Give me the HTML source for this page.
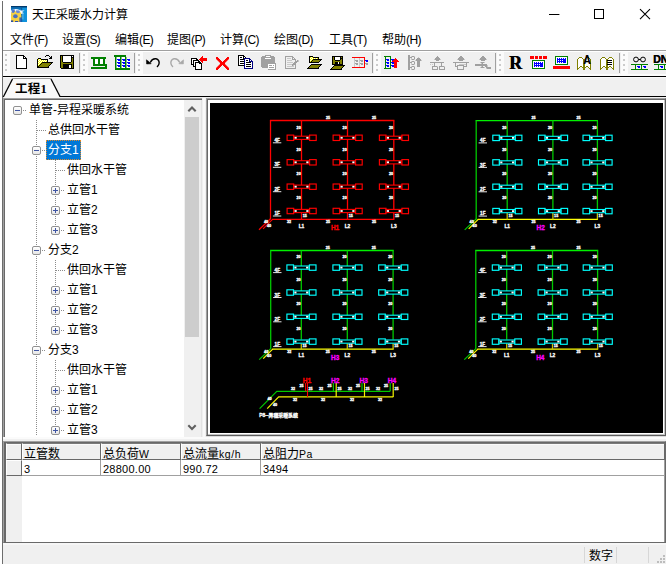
<!DOCTYPE html>
<html lang="zh-CN">
<head>
<meta charset="utf-8">
<title>天正采暖水力计算</title>
<style>
*{box-sizing:border-box;margin:0;padding:0}
html,body{width:668px;height:564px;overflow:hidden;background:#fff}
body{position:relative;font-family:"Liberation Sans","Noto Sans CJK SC",sans-serif;font-size:12px;color:#000}
.a{position:absolute}
svg{position:absolute;left:0;top:0;overflow:visible}
#win{left:3px;top:50px;width:663px;height:514px;background:#f0f0f0}
#lb{left:2px;top:1px;width:1px;height:563px;background:#6d6d6d}
#title{left:32px;top:4px;height:22px;line-height:22px;font-size:12px;white-space:nowrap}
#menu span{position:absolute;top:30px;height:20px;line-height:20px;font-size:12px;white-space:nowrap}
#menu i{font-style:normal;letter-spacing:-.6px}
.hl{background:#a0a0a0;height:1px}
.tb-sep{width:1px;top:53px;height:20px;background:#a0a0a0}
.grip{top:52px;width:7px;height:22px;background:#fbfbfb}
.grip b{position:absolute;left:2px;width:2px;height:2px;background:#cbcbcb}
#tabtxt{left:15px;top:81px;height:17px;line-height:17px;font-family:"Liberation Serif","Noto Sans CJK SC",serif;font-weight:bold;font-size:12.5px;letter-spacing:.2px;white-space:nowrap}
#tree{left:5px;top:100px;width:196px;height:337px;background:#fff;overflow:hidden}
.ti{position:absolute;height:20px;line-height:20px;white-space:nowrap;font-size:12px}
.sel{background:#0078d7;color:#fff;outline:1px dotted #e08a2a;outline-offset:-1px}
.bx{position:absolute;width:9px;height:9px;border:1px solid #919191;border-radius:2px;background:linear-gradient(#fff,#e6e6e6)}
.bx:before{content:"";position:absolute;left:1px;top:3px;width:5px;height:1px;background:#3f55a3}
.bx.p:after{content:"";position:absolute;left:3px;top:1px;width:1px;height:5px;background:#3f55a3}
.vd{position:absolute;width:1px;background:repeating-linear-gradient(to bottom,#8c8c8c 0 1px,transparent 1px 2px)}
.hd{position:absolute;height:1px;background:repeating-linear-gradient(to right,#8c8c8c 0 1px,transparent 1px 2px)}
#sb{left:184px;top:100px;width:17px;height:337px;background:#f0f0f0}
#thumb{left:185px;top:117px;width:14px;height:220px;background:#cdcdcd}
#cv{left:206px;top:98px;width:460px;height:338px;background:#fff;border:1px solid #5c5c5c;border-top-color:#a0a0a0;border-left-color:#a0a0a0;box-shadow:inset 1px 1px 0 0 #696969,inset -1px -1px 0 0 #c4c4c4,0 1px 0 0 #dcdcdc}
#cvb{left:210px;top:103px;width:453px;height:330px;background:#000}
#grid{left:3px;top:441px;width:663px;height:102px;background:#fff;border:1px solid #696969;border-top-color:#a0a0a0;border-left-color:#a0a0a0;box-shadow:inset 2px 1px 0 0 #696969,inset -1px 0 0 0 #9a9a9a}
.gt{font-family:"Liberation Sans","Noto Sans CJK SC",sans-serif;font-size:12px;white-space:nowrap;position:absolute}
.gh{position:absolute;background:#f0f0f0;border-right:1px solid #696969;border-bottom:1px solid #696969;border-top:1px solid #fff;border-left:1px solid #fff}
.gh.t{border-top-color:#7a7a7a;box-shadow:inset 0 1px 0 #fafafa}
.gc{position:absolute;background:#fff;border-right:1px solid #a0a0a0;border-bottom:1px solid #a0a0a0}
.num{font-family:"Liberation Sans",sans-serif;font-size:11px;letter-spacing:.25px}
.lat{font-family:"Liberation Sans",sans-serif;font-size:10.5px;letter-spacing:.6px}
#status span{position:absolute}
</style>
</head>
<body>
<div id="win" class="a"></div>
<div id="lb" class="a"></div>
<svg width="668" height="30" viewBox="0 0 668 30">
<clipPath id="ic"><rect x="11" y="6" width="16" height="16"/></clipPath>
<g clip-path="url(#ic)">
<rect x="11" y="6" width="16" height="16" fill="#1587d3"/>
<rect x="22" y="6" width="5" height="16" fill="#0f92dc"/>
<rect x="11" y="6" width="16" height="1.5" fill="#02396c"/>
<rect x="11" y="7.5" width="10.6" height="1.6" fill="#0d6fb4"/>
<rect x="21.2" y="7.4" width="1" height="14.6" fill="#0a5a98"/>
<path d="M10.5 11.2 Q13.5 8.2 17.5 9.2 L21 10.6 L24.6 10.4 L22 12 L24 13.2 L21 14 L11 13.5z" fill="#f2f6fc"/>
<path d="M11.2 12.2 L13.6 10.6 L16.2 11.6 L19 10.8 L21 13 L21.4 16.5 L20.6 22 L11 22 L11 16.5z" fill="#f7d043"/>
<path d="M12 9.8l2.4-.6 .6 2.2-1.4 1.6-2-.6z" fill="#5478cc"/>
<path d="M16.2 10.2l3.2 .4 .6 1.8-2.2 .8-1.8-1z" fill="#6b8ad6"/>
<ellipse cx="15.4" cy="16.3" rx="2.3" ry="2" fill="#4a70c4"/>
<rect x="11" y="20.4" width="2.2" height="1.6" fill="#2b4fa6"/><rect x="15" y="21" width="3.2" height="1" fill="#2b4fa6"/><rect x="19.4" y="17.4" width="1.8" height="4.6" fill="#3b62b6"/>
<rect x="22.4" y="13.4" width="1" height="6" fill="#8fd0f4" opacity=".7"/>
</g>
<path d="M549 14.5h10.4" stroke="#000" stroke-width="1"/>
<rect x="594.5" y="9.5" width="9" height="9" fill="none" stroke="#000" stroke-width="1"/>
<path d="M640 9.2l10 10M650 9.2l-10 10" stroke="#000" stroke-width="1.1"/>
</svg>
<div id="title" class="a">天正采暖水力计算</div>
<div id="menu"><span style="left:10px">文件<i>(F)</i></span><span style="left:62px">设置<i>(S)</i></span><span style="left:115px">编辑<i>(E)</i></span><span style="left:167px">提图<i>(P)</i></span><span style="left:220px">计算<i>(C)</i></span><span style="left:274px">绘图<i>(D)</i></span><span style="left:329px">工具<i>(T)</i></span><span style="left:382px">帮助<i>(H)</i></span></div>
<div class="a hl" style="left:3px;top:50px;width:663px"></div>
<div class="a" style="left:3px;top:51px;width:663px;height:1px;background:#fff"></div>
<div class="a" style="left:3px;top:74px;width:663px;height:2px;background:#fbfbfb"></div>
<div class="a" style="left:3px;top:76px;width:663px;height:1px;background:#000"></div>
<div class="a" style="left:3px;top:77px;width:663px;height:1px;background:#fafafa"></div>
<div class="a grip" style="left:3px"><b style="top:2px"></b><b style="top:7px"></b><b style="top:12px"></b><b style="top:17px"></b></div>
<div class="a grip" style="left:81px"><b style="top:2px"></b><b style="top:7px"></b><b style="top:12px"></b><b style="top:17px"></b></div>
<div class="a grip" style="left:136px"><b style="top:2px"></b><b style="top:7px"></b><b style="top:12px"></b><b style="top:17px"></b></div>
<div class="a grip" style="left:374px"><b style="top:2px"></b><b style="top:7px"></b><b style="top:12px"></b><b style="top:17px"></b></div>
<div class="a grip" style="left:497px"><b style="top:2px"></b><b style="top:7px"></b><b style="top:12px"></b><b style="top:17px"></b></div>
<div class="a grip" style="left:621px"><b style="top:2px"></b><b style="top:7px"></b><b style="top:12px"></b><b style="top:17px"></b></div>
<div class="a tb-sep" style="left:79px"></div>
<div class="a tb-sep" style="left:134px"></div>
<div class="a tb-sep" style="left:372px"></div>
<div class="a tb-sep" style="left:495px"></div>
<div class="a tb-sep" style="left:619px"></div>
<svg width="668" height="564" viewBox="0 0 668 564">
<path d="M3.5 96.5 L12.5 79 H51 L60 96.5 V98 H3.5z" fill="#f9f9f9"/>
<path d="M3.3 97 L12.5 79" stroke="#000" stroke-width="1.3" fill="none"/>
<path d="M12 78.5 H51.5" stroke="#a0a0a0" stroke-width="1" fill="none"/>
<path d="M51 79 L60 96.5" stroke="#000" stroke-width="1.3" fill="none"/><path d="M59.5 96.5 H666" stroke="#000" stroke-width="1" fill="none"/>
</svg>
<div id="tabtxt" class="a">工程1</div>
<div id="tree" class="a">
<div class="vd" style="left:31px;top:20px;height:315px"></div>
<div class="vd" style="left:50px;top:60px;height:71px"></div>
<div class="vd" style="left:50px;top:160px;height:71px"></div>
<div class="vd" style="left:50px;top:260px;height:71px"></div>
<div class="hd" style="left:18px;top:10px;width:4px"></div>
<div class="bx" style="left:8px;top:6px"></div>
<div class="ti" style="left:24px;top:0px">单管-异程采暖系统</div>
<div class="hd" style="left:32px;top:30px;width:9px"></div>
<div class="ti" style="left:43px;top:20px">总供回水干管</div>
<div class="hd" style="left:37px;top:50px;width:4px"></div>
<div class="bx" style="left:27px;top:46px"></div>
<div class="ti sel" style="left:41px;top:40px;height:19.5px;line-height:20px;padding:0 2px 0 2px">分支1</div>
<div class="hd" style="left:51px;top:70px;width:9px"></div>
<div class="ti" style="left:62px;top:60px">供回水干管</div>
<div class="hd" style="left:56px;top:90px;width:4px"></div>
<div class="bx p" style="left:46px;top:86px"></div>
<div class="ti" style="left:62px;top:80px">立管1</div>
<div class="hd" style="left:56px;top:110px;width:4px"></div>
<div class="bx p" style="left:46px;top:106px"></div>
<div class="ti" style="left:62px;top:100px">立管2</div>
<div class="hd" style="left:56px;top:130px;width:4px"></div>
<div class="bx p" style="left:46px;top:126px"></div>
<div class="ti" style="left:62px;top:120px">立管3</div>
<div class="hd" style="left:37px;top:150px;width:4px"></div>
<div class="bx" style="left:27px;top:146px"></div>
<div class="ti" style="left:43px;top:140px">分支2</div>
<div class="hd" style="left:51px;top:170px;width:9px"></div>
<div class="ti" style="left:62px;top:160px">供回水干管</div>
<div class="hd" style="left:56px;top:190px;width:4px"></div>
<div class="bx p" style="left:46px;top:186px"></div>
<div class="ti" style="left:62px;top:180px">立管1</div>
<div class="hd" style="left:56px;top:210px;width:4px"></div>
<div class="bx p" style="left:46px;top:206px"></div>
<div class="ti" style="left:62px;top:200px">立管2</div>
<div class="hd" style="left:56px;top:230px;width:4px"></div>
<div class="bx p" style="left:46px;top:226px"></div>
<div class="ti" style="left:62px;top:220px">立管3</div>
<div class="hd" style="left:37px;top:250px;width:4px"></div>
<div class="bx" style="left:27px;top:246px"></div>
<div class="ti" style="left:43px;top:240px">分支3</div>
<div class="hd" style="left:51px;top:270px;width:9px"></div>
<div class="ti" style="left:62px;top:260px">供回水干管</div>
<div class="hd" style="left:56px;top:290px;width:4px"></div>
<div class="bx p" style="left:46px;top:286px"></div>
<div class="ti" style="left:62px;top:280px">立管1</div>
<div class="hd" style="left:56px;top:310px;width:4px"></div>
<div class="bx p" style="left:46px;top:306px"></div>
<div class="ti" style="left:62px;top:300px">立管2</div>
<div class="hd" style="left:56px;top:330px;width:4px"></div>
<div class="bx p" style="left:46px;top:326px"></div>
<div class="ti" style="left:62px;top:320px">立管3</div>
</div>
<div id="sb" class="a"></div><div id="thumb" class="a"></div>
<svg width="668" height="564" viewBox="0 0 668 564">
<path d="M188.3 111.2l3.7-3.7 3.7 3.7" stroke="#606060" stroke-width="2.1" fill="none"/>
<path d="M188.3 425.3l3.7 3.7 3.7-3.7" stroke="#606060" stroke-width="2.1" fill="none"/>
</svg>
<div class="a" style="left:3px;top:98px;width:199px;height:1px;background:#a0a0a0"></div>
<div class="a" style="left:3px;top:99px;width:199px;height:1px;background:#696969"></div>
<div class="a" style="left:3px;top:98px;width:1px;height:340px;background:#a0a0a0"></div>
<div class="a" style="left:4px;top:99px;width:1px;height:339px;background:#696969"></div>
<div class="a" style="left:201px;top:100px;width:1px;height:337px;background:#e3e3e3"></div>
<div class="a" style="left:3px;top:437px;width:663px;height:2px;background:#fbfbfb"></div>
<div class="a" style="left:203px;top:98px;width:2px;height:340px;background:#fafafa"></div>
<svg width="666" height="80" viewBox="0 0 666 80" shape-rendering="crispEdges" style="overflow:hidden"><rect x="16" y="55" width="8" height="1" fill="#000"/><rect x="16" y="56" width="1" height="1" fill="#000"/><rect x="17" y="56" width="6" height="1" fill="#fff"/><rect x="23" y="56" width="2" height="1" fill="#000"/><rect x="16" y="57" width="1" height="1" fill="#000"/><rect x="17" y="57" width="6" height="1" fill="#fff"/><rect x="23" y="57" width="1" height="1" fill="#000"/><rect x="24" y="57" width="1" height="1" fill="#fff"/><rect x="25" y="57" width="1" height="1" fill="#000"/><rect x="16" y="58" width="1" height="1" fill="#000"/><rect x="17" y="58" width="6" height="1" fill="#fff"/><rect x="23" y="58" width="4" height="1" fill="#000"/><rect x="16" y="59" width="1" height="1" fill="#000"/><rect x="17" y="59" width="9" height="1" fill="#fff"/><rect x="26" y="59" width="1" height="1" fill="#000"/><rect x="16" y="60" width="1" height="1" fill="#000"/><rect x="17" y="60" width="9" height="1" fill="#fff"/><rect x="26" y="60" width="1" height="1" fill="#000"/><rect x="16" y="61" width="1" height="1" fill="#000"/><rect x="17" y="61" width="9" height="1" fill="#fff"/><rect x="26" y="61" width="1" height="1" fill="#000"/><rect x="16" y="62" width="1" height="1" fill="#000"/><rect x="17" y="62" width="9" height="1" fill="#fff"/><rect x="26" y="62" width="1" height="1" fill="#000"/><rect x="16" y="63" width="1" height="1" fill="#000"/><rect x="17" y="63" width="9" height="1" fill="#fff"/><rect x="26" y="63" width="1" height="1" fill="#000"/><rect x="16" y="64" width="1" height="1" fill="#000"/><rect x="17" y="64" width="9" height="1" fill="#fff"/><rect x="26" y="64" width="1" height="1" fill="#000"/><rect x="16" y="65" width="1" height="1" fill="#000"/><rect x="17" y="65" width="9" height="1" fill="#fff"/><rect x="26" y="65" width="1" height="1" fill="#000"/><rect x="16" y="66" width="1" height="1" fill="#000"/><rect x="17" y="66" width="9" height="1" fill="#fff"/><rect x="26" y="66" width="1" height="1" fill="#000"/><rect x="16" y="67" width="1" height="1" fill="#000"/><rect x="17" y="67" width="9" height="1" fill="#fff"/><rect x="26" y="67" width="1" height="1" fill="#000"/><rect x="16" y="68" width="11" height="1" fill="#000"/><rect x="46" y="55" width="3" height="1" fill="#000"/><rect x="45" y="56" width="1" height="1" fill="#000"/><rect x="49" y="56" width="1" height="1" fill="#000"/><rect x="51" y="56" width="1" height="1" fill="#000"/><rect x="50" y="57" width="2" height="1" fill="#000"/><rect x="38" y="58" width="3" height="1" fill="#000"/><rect x="49" y="58" width="3" height="1" fill="#000"/><rect x="37" y="59" width="1" height="1" fill="#000"/><rect x="38" y="59" width="1" height="1" fill="#ffff00"/><rect x="39" y="59" width="1" height="1" fill="#fff"/><rect x="40" y="59" width="1" height="1" fill="#ffff00"/><rect x="41" y="59" width="7" height="1" fill="#000"/><rect x="37" y="60" width="1" height="1" fill="#000"/><rect x="38" y="60" width="1" height="1" fill="#fff"/><rect x="39" y="60" width="1" height="1" fill="#ffff00"/><rect x="40" y="60" width="1" height="1" fill="#fff"/><rect x="41" y="60" width="1" height="1" fill="#ffff00"/><rect x="42" y="60" width="1" height="1" fill="#fff"/><rect x="43" y="60" width="1" height="1" fill="#ffff00"/><rect x="44" y="60" width="1" height="1" fill="#fff"/><rect x="45" y="60" width="1" height="1" fill="#ffff00"/><rect x="46" y="60" width="1" height="1" fill="#fff"/><rect x="47" y="60" width="1" height="1" fill="#000"/><rect x="37" y="61" width="1" height="1" fill="#000"/><rect x="38" y="61" width="1" height="1" fill="#ffff00"/><rect x="39" y="61" width="1" height="1" fill="#fff"/><rect x="40" y="61" width="1" height="1" fill="#ffff00"/><rect x="41" y="61" width="1" height="1" fill="#fff"/><rect x="42" y="61" width="1" height="1" fill="#ffff00"/><rect x="43" y="61" width="1" height="1" fill="#fff"/><rect x="44" y="61" width="1" height="1" fill="#ffff00"/><rect x="45" y="61" width="1" height="1" fill="#fff"/><rect x="46" y="61" width="1" height="1" fill="#ffff00"/><rect x="47" y="61" width="1" height="1" fill="#000"/><rect x="37" y="62" width="1" height="1" fill="#000"/><rect x="38" y="62" width="1" height="1" fill="#fff"/><rect x="39" y="62" width="1" height="1" fill="#ffff00"/><rect x="40" y="62" width="1" height="1" fill="#fff"/><rect x="41" y="62" width="1" height="1" fill="#ffff00"/><rect x="42" y="62" width="11" height="1" fill="#000"/><rect x="37" y="63" width="1" height="1" fill="#000"/><rect x="38" y="63" width="1" height="1" fill="#ffff00"/><rect x="39" y="63" width="1" height="1" fill="#fff"/><rect x="40" y="63" width="1" height="1" fill="#ffff00"/><rect x="41" y="63" width="1" height="1" fill="#000"/><rect x="42" y="63" width="9" height="1" fill="#808000"/><rect x="51" y="63" width="1" height="1" fill="#000"/><rect x="37" y="64" width="1" height="1" fill="#000"/><rect x="38" y="64" width="1" height="1" fill="#fff"/><rect x="39" y="64" width="1" height="1" fill="#ffff00"/><rect x="40" y="64" width="1" height="1" fill="#000"/><rect x="41" y="64" width="9" height="1" fill="#808000"/><rect x="50" y="64" width="1" height="1" fill="#000"/><rect x="37" y="65" width="1" height="1" fill="#000"/><rect x="38" y="65" width="1" height="1" fill="#ffff00"/><rect x="39" y="65" width="1" height="1" fill="#000"/><rect x="40" y="65" width="9" height="1" fill="#808000"/><rect x="49" y="65" width="1" height="1" fill="#000"/><rect x="37" y="66" width="2" height="1" fill="#000"/><rect x="39" y="66" width="9" height="1" fill="#808000"/><rect x="48" y="66" width="1" height="1" fill="#000"/><rect x="37" y="67" width="12" height="1" fill="#000"/><rect x="60" y="55" width="14" height="1" fill="#000"/><rect x="60" y="56" width="1" height="1" fill="#000"/><rect x="61" y="56" width="1" height="1" fill="#808000"/><rect x="62" y="56" width="1" height="1" fill="#000"/><rect x="63" y="56" width="8" height="1" fill="#fff"/><rect x="71" y="56" width="1" height="1" fill="#000"/><rect x="72" y="56" width="1" height="1" fill="#fff"/><rect x="73" y="56" width="1" height="1" fill="#000"/><rect x="60" y="57" width="1" height="1" fill="#000"/><rect x="61" y="57" width="1" height="1" fill="#808000"/><rect x="62" y="57" width="1" height="1" fill="#000"/><rect x="63" y="57" width="8" height="1" fill="#fff"/><rect x="71" y="57" width="3" height="1" fill="#000"/><rect x="60" y="58" width="1" height="1" fill="#000"/><rect x="61" y="58" width="1" height="1" fill="#808000"/><rect x="62" y="58" width="1" height="1" fill="#000"/><rect x="63" y="58" width="8" height="1" fill="#fff"/><rect x="71" y="58" width="1" height="1" fill="#000"/><rect x="72" y="58" width="1" height="1" fill="#808000"/><rect x="73" y="58" width="1" height="1" fill="#000"/><rect x="60" y="59" width="1" height="1" fill="#000"/><rect x="61" y="59" width="1" height="1" fill="#808000"/><rect x="62" y="59" width="1" height="1" fill="#000"/><rect x="63" y="59" width="8" height="1" fill="#fff"/><rect x="71" y="59" width="1" height="1" fill="#000"/><rect x="72" y="59" width="1" height="1" fill="#808000"/><rect x="73" y="59" width="1" height="1" fill="#000"/><rect x="60" y="60" width="1" height="1" fill="#000"/><rect x="61" y="60" width="1" height="1" fill="#808000"/><rect x="62" y="60" width="1" height="1" fill="#000"/><rect x="63" y="60" width="8" height="1" fill="#fff"/><rect x="71" y="60" width="1" height="1" fill="#000"/><rect x="72" y="60" width="1" height="1" fill="#808000"/><rect x="73" y="60" width="1" height="1" fill="#000"/><rect x="60" y="61" width="1" height="1" fill="#000"/><rect x="61" y="61" width="1" height="1" fill="#808000"/><rect x="62" y="61" width="1" height="1" fill="#000"/><rect x="63" y="61" width="8" height="1" fill="#fff"/><rect x="71" y="61" width="1" height="1" fill="#000"/><rect x="72" y="61" width="1" height="1" fill="#808000"/><rect x="73" y="61" width="1" height="1" fill="#000"/><rect x="60" y="62" width="1" height="1" fill="#000"/><rect x="61" y="62" width="2" height="1" fill="#808000"/><rect x="63" y="62" width="8" height="1" fill="#000"/><rect x="71" y="62" width="2" height="1" fill="#808000"/><rect x="73" y="62" width="1" height="1" fill="#000"/><rect x="60" y="63" width="1" height="1" fill="#000"/><rect x="61" y="63" width="12" height="1" fill="#808000"/><rect x="73" y="63" width="1" height="1" fill="#000"/><rect x="60" y="64" width="1" height="1" fill="#000"/><rect x="61" y="64" width="2" height="1" fill="#808000"/><rect x="63" y="64" width="9" height="1" fill="#000"/><rect x="72" y="64" width="1" height="1" fill="#808000"/><rect x="73" y="64" width="1" height="1" fill="#000"/><rect x="60" y="65" width="1" height="1" fill="#000"/><rect x="61" y="65" width="2" height="1" fill="#808000"/><rect x="63" y="65" width="6" height="1" fill="#000"/><rect x="69" y="65" width="2" height="1" fill="#fff"/><rect x="71" y="65" width="1" height="1" fill="#000"/><rect x="72" y="65" width="1" height="1" fill="#808000"/><rect x="73" y="65" width="1" height="1" fill="#000"/><rect x="60" y="66" width="1" height="1" fill="#000"/><rect x="61" y="66" width="2" height="1" fill="#808000"/><rect x="63" y="66" width="6" height="1" fill="#000"/><rect x="69" y="66" width="2" height="1" fill="#fff"/><rect x="71" y="66" width="1" height="1" fill="#000"/><rect x="72" y="66" width="1" height="1" fill="#808000"/><rect x="73" y="66" width="1" height="1" fill="#000"/><rect x="60" y="67" width="1" height="1" fill="#000"/><rect x="61" y="67" width="2" height="1" fill="#808000"/><rect x="63" y="67" width="6" height="1" fill="#000"/><rect x="69" y="67" width="2" height="1" fill="#fff"/><rect x="71" y="67" width="1" height="1" fill="#000"/><rect x="72" y="67" width="1" height="1" fill="#808000"/><rect x="73" y="67" width="1" height="1" fill="#000"/><rect x="61" y="68" width="13" height="1" fill="#000"/><rect x="91" y="57" width="15" height="1" fill="#008000"/><rect x="91" y="58" width="15" height="1" fill="#008000"/><rect x="93" y="59" width="2" height="1" fill="#008000"/><rect x="95" y="59" width="3" height="1" fill="#fff"/><rect x="98" y="59" width="2" height="1" fill="#008000"/><rect x="100" y="59" width="3" height="1" fill="#fff"/><rect x="103" y="59" width="2" height="1" fill="#008000"/><rect x="93" y="60" width="2" height="1" fill="#008000"/><rect x="95" y="60" width="3" height="1" fill="#fff"/><rect x="98" y="60" width="2" height="1" fill="#008000"/><rect x="100" y="60" width="3" height="1" fill="#fff"/><rect x="103" y="60" width="2" height="1" fill="#008000"/><rect x="93" y="61" width="2" height="1" fill="#008000"/><rect x="95" y="61" width="3" height="1" fill="#fff"/><rect x="98" y="61" width="2" height="1" fill="#008000"/><rect x="100" y="61" width="3" height="1" fill="#fff"/><rect x="103" y="61" width="2" height="1" fill="#008000"/><rect x="93" y="62" width="2" height="1" fill="#008000"/><rect x="95" y="62" width="3" height="1" fill="#fff"/><rect x="98" y="62" width="2" height="1" fill="#008000"/><rect x="100" y="62" width="3" height="1" fill="#fff"/><rect x="103" y="62" width="2" height="1" fill="#008000"/><rect x="93" y="63" width="2" height="1" fill="#008000"/><rect x="95" y="63" width="3" height="1" fill="#fff"/><rect x="98" y="63" width="2" height="1" fill="#008000"/><rect x="100" y="63" width="3" height="1" fill="#fff"/><rect x="103" y="63" width="2" height="1" fill="#008000"/><rect x="93" y="64" width="14" height="1" fill="#008000"/><rect x="93" y="65" width="14" height="1" fill="#008000"/><rect x="105" y="66" width="2" height="1" fill="#008000"/><rect x="91" y="67" width="16" height="1" fill="#008000"/><rect x="91" y="68" width="16" height="1" fill="#008000"/><rect x="114" y="55" width="12" height="1" fill="#008000"/><rect x="114" y="56" width="12" height="1" fill="#008000"/><rect x="115" y="57" width="1" height="1" fill="#008000"/><rect x="116" y="57" width="1" height="1" fill="#7fbf7f"/><rect x="117" y="57" width="3" height="1" fill="#fff"/><rect x="120" y="57" width="1" height="1" fill="#008000"/><rect x="121" y="57" width="1" height="1" fill="#7fbf7f"/><rect x="122" y="57" width="3" height="1" fill="#fff"/><rect x="125" y="57" width="1" height="1" fill="#008000"/><rect x="126" y="57" width="1" height="1" fill="#7fbf7f"/><rect x="115" y="58" width="1" height="1" fill="#008000"/><rect x="116" y="58" width="1" height="1" fill="#7fbf7f"/><rect x="117" y="58" width="3" height="1" fill="#fff"/><rect x="120" y="58" width="1" height="1" fill="#008000"/><rect x="121" y="58" width="1" height="1" fill="#7fbf7f"/><rect x="122" y="58" width="3" height="1" fill="#fff"/><rect x="125" y="58" width="1" height="1" fill="#008000"/><rect x="126" y="58" width="1" height="1" fill="#7fbf7f"/><rect x="127" y="58" width="2" height="1" fill="#fff"/><rect x="115" y="59" width="1" height="1" fill="#008000"/><rect x="116" y="59" width="1" height="1" fill="#7fbf7f"/><rect x="117" y="59" width="3" height="1" fill="#0000ff"/><rect x="120" y="59" width="1" height="1" fill="#008000"/><rect x="121" y="59" width="1" height="1" fill="#7fbf7f"/><rect x="122" y="59" width="3" height="1" fill="#0000ff"/><rect x="125" y="59" width="1" height="1" fill="#008000"/><rect x="126" y="59" width="1" height="1" fill="#7fbf7f"/><rect x="127" y="59" width="3" height="1" fill="#0000ff"/><rect x="115" y="60" width="1" height="1" fill="#008000"/><rect x="116" y="60" width="1" height="1" fill="#7fbf7f"/><rect x="117" y="60" width="1" height="1" fill="#fff"/><rect x="118" y="60" width="2" height="1" fill="#0000ff"/><rect x="120" y="60" width="1" height="1" fill="#008000"/><rect x="121" y="60" width="1" height="1" fill="#7fbf7f"/><rect x="122" y="60" width="1" height="1" fill="#fff"/><rect x="123" y="60" width="2" height="1" fill="#0000ff"/><rect x="125" y="60" width="1" height="1" fill="#008000"/><rect x="126" y="60" width="1" height="1" fill="#7fbf7f"/><rect x="127" y="60" width="1" height="1" fill="#fff"/><rect x="128" y="60" width="2" height="1" fill="#0000ff"/><rect x="115" y="61" width="1" height="1" fill="#008000"/><rect x="116" y="61" width="1" height="1" fill="#7fbf7f"/><rect x="117" y="61" width="3" height="1" fill="#fff"/><rect x="120" y="61" width="1" height="1" fill="#008000"/><rect x="121" y="61" width="1" height="1" fill="#7fbf7f"/><rect x="122" y="61" width="3" height="1" fill="#fff"/><rect x="125" y="61" width="1" height="1" fill="#008000"/><rect x="126" y="61" width="1" height="1" fill="#7fbf7f"/><rect x="127" y="61" width="3" height="1" fill="#fff"/><rect x="115" y="62" width="1" height="1" fill="#008000"/><rect x="116" y="62" width="1" height="1" fill="#7fbf7f"/><rect x="117" y="62" width="3" height="1" fill="#0000ff"/><rect x="120" y="62" width="1" height="1" fill="#008000"/><rect x="121" y="62" width="1" height="1" fill="#7fbf7f"/><rect x="122" y="62" width="3" height="1" fill="#0000ff"/><rect x="125" y="62" width="1" height="1" fill="#008000"/><rect x="126" y="62" width="1" height="1" fill="#7fbf7f"/><rect x="127" y="62" width="3" height="1" fill="#0000ff"/><rect x="115" y="63" width="1" height="1" fill="#008000"/><rect x="116" y="63" width="1" height="1" fill="#7fbf7f"/><rect x="117" y="63" width="1" height="1" fill="#fff"/><rect x="118" y="63" width="2" height="1" fill="#0000ff"/><rect x="120" y="63" width="1" height="1" fill="#008000"/><rect x="121" y="63" width="1" height="1" fill="#7fbf7f"/><rect x="122" y="63" width="1" height="1" fill="#fff"/><rect x="123" y="63" width="2" height="1" fill="#0000ff"/><rect x="125" y="63" width="1" height="1" fill="#008000"/><rect x="126" y="63" width="1" height="1" fill="#7fbf7f"/><rect x="127" y="63" width="1" height="1" fill="#fff"/><rect x="128" y="63" width="2" height="1" fill="#0000ff"/><rect x="115" y="64" width="1" height="1" fill="#008000"/><rect x="116" y="64" width="1" height="1" fill="#7fbf7f"/><rect x="117" y="64" width="3" height="1" fill="#fff"/><rect x="120" y="64" width="1" height="1" fill="#008000"/><rect x="121" y="64" width="1" height="1" fill="#7fbf7f"/><rect x="122" y="64" width="3" height="1" fill="#fff"/><rect x="125" y="64" width="1" height="1" fill="#008000"/><rect x="126" y="64" width="1" height="1" fill="#7fbf7f"/><rect x="127" y="64" width="3" height="1" fill="#fff"/><rect x="115" y="65" width="1" height="1" fill="#008000"/><rect x="116" y="65" width="1" height="1" fill="#7fbf7f"/><rect x="117" y="65" width="3" height="1" fill="#0000ff"/><rect x="120" y="65" width="1" height="1" fill="#008000"/><rect x="121" y="65" width="1" height="1" fill="#7fbf7f"/><rect x="122" y="65" width="3" height="1" fill="#0000ff"/><rect x="125" y="65" width="1" height="1" fill="#008000"/><rect x="126" y="65" width="1" height="1" fill="#7fbf7f"/><rect x="127" y="65" width="3" height="1" fill="#0000ff"/><rect x="115" y="66" width="1" height="1" fill="#008000"/><rect x="116" y="66" width="1" height="1" fill="#7fbf7f"/><rect x="117" y="66" width="1" height="1" fill="#fff"/><rect x="118" y="66" width="2" height="1" fill="#0000ff"/><rect x="120" y="66" width="1" height="1" fill="#008000"/><rect x="121" y="66" width="1" height="1" fill="#7fbf7f"/><rect x="122" y="66" width="1" height="1" fill="#fff"/><rect x="123" y="66" width="2" height="1" fill="#0000ff"/><rect x="125" y="66" width="1" height="1" fill="#008000"/><rect x="126" y="66" width="1" height="1" fill="#7fbf7f"/><rect x="127" y="66" width="1" height="1" fill="#fff"/><rect x="128" y="66" width="2" height="1" fill="#0000ff"/><rect x="115" y="67" width="1" height="1" fill="#008000"/><rect x="116" y="67" width="1" height="1" fill="#7fbf7f"/><rect x="117" y="67" width="3" height="1" fill="#fff"/><rect x="120" y="67" width="1" height="1" fill="#008000"/><rect x="121" y="67" width="1" height="1" fill="#7fbf7f"/><rect x="122" y="67" width="3" height="1" fill="#fff"/><rect x="125" y="67" width="1" height="1" fill="#008000"/><rect x="126" y="67" width="1" height="1" fill="#7fbf7f"/><rect x="127" y="67" width="2" height="1" fill="#fff"/><rect x="115" y="68" width="15" height="1" fill="#008000"/><rect x="115" y="69" width="15" height="1" fill="#008000"/><rect x="191" y="58" width="6" height="1" fill="#000"/><rect x="191" y="59" width="1" height="1" fill="#000"/><rect x="192" y="59" width="4" height="1" fill="#fff"/><rect x="196" y="59" width="2" height="1" fill="#000"/><rect x="191" y="60" width="1" height="1" fill="#000"/><rect x="192" y="60" width="1" height="1" fill="#fff"/><rect x="193" y="60" width="6" height="1" fill="#000"/><rect x="191" y="61" width="1" height="1" fill="#000"/><rect x="192" y="61" width="1" height="1" fill="#fff"/><rect x="193" y="61" width="1" height="1" fill="#000"/><rect x="194" y="61" width="4" height="1" fill="#fff"/><rect x="198" y="61" width="2" height="1" fill="#000"/><rect x="191" y="62" width="1" height="1" fill="#000"/><rect x="192" y="62" width="1" height="1" fill="#fff"/><rect x="193" y="62" width="1" height="1" fill="#000"/><rect x="194" y="62" width="1" height="1" fill="#fff"/><rect x="195" y="62" width="6" height="1" fill="#000"/><rect x="191" y="63" width="1" height="1" fill="#000"/><rect x="192" y="63" width="1" height="1" fill="#fff"/><rect x="193" y="63" width="1" height="1" fill="#000"/><rect x="194" y="63" width="1" height="1" fill="#fff"/><rect x="195" y="63" width="1" height="1" fill="#000"/><rect x="196" y="63" width="3" height="1" fill="#fff"/><rect x="199" y="63" width="3" height="1" fill="#000"/><rect x="191" y="64" width="3" height="1" fill="#000"/><rect x="194" y="64" width="1" height="1" fill="#fff"/><rect x="195" y="64" width="1" height="1" fill="#000"/><rect x="196" y="64" width="5" height="1" fill="#fff"/><rect x="201" y="64" width="1" height="1" fill="#000"/><rect x="193" y="65" width="1" height="1" fill="#000"/><rect x="194" y="65" width="1" height="1" fill="#fff"/><rect x="195" y="65" width="1" height="1" fill="#000"/><rect x="196" y="65" width="5" height="1" fill="#fff"/><rect x="201" y="65" width="1" height="1" fill="#000"/><rect x="193" y="66" width="3" height="1" fill="#000"/><rect x="196" y="66" width="5" height="1" fill="#fff"/><rect x="201" y="66" width="1" height="1" fill="#000"/><rect x="195" y="67" width="1" height="1" fill="#000"/><rect x="196" y="67" width="5" height="1" fill="#fff"/><rect x="201" y="67" width="1" height="1" fill="#000"/><rect x="195" y="68" width="1" height="1" fill="#000"/><rect x="196" y="68" width="5" height="1" fill="#fff"/><rect x="201" y="68" width="1" height="1" fill="#000"/><rect x="195" y="69" width="7" height="1" fill="#000"/><rect x="202" y="56" width="1" height="1" fill="#ff0000"/><rect x="201" y="57" width="2" height="1" fill="#ff0000"/><rect x="200" y="58" width="7" height="1" fill="#ff0000"/><rect x="199" y="59" width="8" height="1" fill="#ff0000"/><rect x="200" y="60" width="7" height="1" fill="#ff0000"/><rect x="201" y="61" width="2" height="1" fill="#ff0000"/><rect x="202" y="62" width="1" height="1" fill="#ff0000"/><rect x="216" y="57" width="2" height="1" fill="#ff0000"/><rect x="227" y="57" width="2" height="1" fill="#ff0000"/><rect x="216" y="58" width="3" height="1" fill="#ff0000"/><rect x="226" y="58" width="3" height="1" fill="#ff0000"/><rect x="216" y="59" width="1" height="1" fill="#ff8080"/><rect x="217" y="59" width="3" height="1" fill="#ff0000"/><rect x="225" y="59" width="3" height="1" fill="#ff0000"/><rect x="228" y="59" width="1" height="1" fill="#ff8080"/><rect x="217" y="60" width="1" height="1" fill="#ff8080"/><rect x="218" y="60" width="3" height="1" fill="#ff0000"/><rect x="224" y="60" width="3" height="1" fill="#ff0000"/><rect x="227" y="60" width="1" height="1" fill="#ff8080"/><rect x="218" y="61" width="1" height="1" fill="#ff8080"/><rect x="219" y="61" width="3" height="1" fill="#ff0000"/><rect x="223" y="61" width="3" height="1" fill="#ff0000"/><rect x="226" y="61" width="1" height="1" fill="#ff8080"/><rect x="219" y="62" width="1" height="1" fill="#ff8080"/><rect x="220" y="62" width="5" height="1" fill="#ff0000"/><rect x="225" y="62" width="1" height="1" fill="#ff8080"/><rect x="220" y="63" width="5" height="1" fill="#ff0000"/><rect x="219" y="64" width="1" height="1" fill="#ff8080"/><rect x="220" y="64" width="5" height="1" fill="#ff0000"/><rect x="225" y="64" width="1" height="1" fill="#ff8080"/><rect x="218" y="65" width="1" height="1" fill="#ff8080"/><rect x="219" y="65" width="3" height="1" fill="#ff0000"/><rect x="223" y="65" width="3" height="1" fill="#ff0000"/><rect x="226" y="65" width="1" height="1" fill="#ff8080"/><rect x="217" y="66" width="1" height="1" fill="#ff8080"/><rect x="218" y="66" width="3" height="1" fill="#ff0000"/><rect x="224" y="66" width="3" height="1" fill="#ff0000"/><rect x="227" y="66" width="1" height="1" fill="#ff8080"/><rect x="216" y="67" width="1" height="1" fill="#ff8080"/><rect x="217" y="67" width="3" height="1" fill="#ff0000"/><rect x="225" y="67" width="3" height="1" fill="#ff0000"/><rect x="228" y="67" width="1" height="1" fill="#ff8080"/><rect x="216" y="68" width="3" height="1" fill="#ff0000"/><rect x="226" y="68" width="3" height="1" fill="#ff0000"/><rect x="216" y="69" width="2" height="1" fill="#ff0000"/><rect x="227" y="69" width="2" height="1" fill="#ff0000"/><rect x="238" y="55" width="6" height="1" fill="#000"/><rect x="238" y="56" width="1" height="1" fill="#000"/><rect x="239" y="56" width="4" height="1" fill="#fff"/><rect x="243" y="56" width="2" height="1" fill="#000"/><rect x="238" y="57" width="1" height="1" fill="#000"/><rect x="239" y="57" width="1" height="1" fill="#fff"/><rect x="240" y="57" width="2" height="1" fill="#000"/><rect x="242" y="57" width="1" height="1" fill="#fff"/><rect x="243" y="57" width="1" height="1" fill="#000"/><rect x="244" y="57" width="1" height="1" fill="#fff"/><rect x="245" y="57" width="1" height="1" fill="#000"/><rect x="238" y="58" width="1" height="1" fill="#000"/><rect x="239" y="58" width="4" height="1" fill="#fff"/><rect x="243" y="58" width="1" height="1" fill="#000"/><rect x="244" y="58" width="6" height="1" fill="#000080"/><rect x="238" y="59" width="1" height="1" fill="#000"/><rect x="239" y="59" width="1" height="1" fill="#fff"/><rect x="240" y="59" width="4" height="1" fill="#000"/><rect x="244" y="59" width="1" height="1" fill="#000080"/><rect x="245" y="59" width="4" height="1" fill="#fff"/><rect x="249" y="59" width="2" height="1" fill="#000080"/><rect x="238" y="60" width="1" height="1" fill="#000"/><rect x="239" y="60" width="5" height="1" fill="#fff"/><rect x="244" y="60" width="1" height="1" fill="#000080"/><rect x="245" y="60" width="1" height="1" fill="#fff"/><rect x="246" y="60" width="2" height="1" fill="#000"/><rect x="248" y="60" width="1" height="1" fill="#fff"/><rect x="249" y="60" width="1" height="1" fill="#000080"/><rect x="250" y="60" width="1" height="1" fill="#fff"/><rect x="251" y="60" width="1" height="1" fill="#000080"/><rect x="238" y="61" width="1" height="1" fill="#000"/><rect x="239" y="61" width="1" height="1" fill="#fff"/><rect x="240" y="61" width="4" height="1" fill="#000"/><rect x="244" y="61" width="1" height="1" fill="#000080"/><rect x="245" y="61" width="4" height="1" fill="#fff"/><rect x="249" y="61" width="4" height="1" fill="#000080"/><rect x="238" y="62" width="1" height="1" fill="#000"/><rect x="239" y="62" width="5" height="1" fill="#fff"/><rect x="244" y="62" width="1" height="1" fill="#000080"/><rect x="245" y="62" width="1" height="1" fill="#fff"/><rect x="246" y="62" width="5" height="1" fill="#000"/><rect x="251" y="62" width="1" height="1" fill="#fff"/><rect x="252" y="62" width="1" height="1" fill="#000080"/><rect x="238" y="63" width="1" height="1" fill="#000"/><rect x="239" y="63" width="1" height="1" fill="#fff"/><rect x="240" y="63" width="4" height="1" fill="#000"/><rect x="244" y="63" width="1" height="1" fill="#000080"/><rect x="245" y="63" width="7" height="1" fill="#fff"/><rect x="252" y="63" width="1" height="1" fill="#000080"/><rect x="238" y="64" width="1" height="1" fill="#000"/><rect x="239" y="64" width="5" height="1" fill="#fff"/><rect x="244" y="64" width="1" height="1" fill="#000080"/><rect x="245" y="64" width="1" height="1" fill="#fff"/><rect x="246" y="64" width="5" height="1" fill="#000"/><rect x="251" y="64" width="1" height="1" fill="#fff"/><rect x="252" y="64" width="1" height="1" fill="#000080"/><rect x="238" y="65" width="6" height="1" fill="#000"/><rect x="244" y="65" width="1" height="1" fill="#000080"/><rect x="245" y="65" width="7" height="1" fill="#fff"/><rect x="252" y="65" width="1" height="1" fill="#000080"/><rect x="244" y="66" width="1" height="1" fill="#000080"/><rect x="245" y="66" width="1" height="1" fill="#fff"/><rect x="246" y="66" width="5" height="1" fill="#000"/><rect x="251" y="66" width="1" height="1" fill="#fff"/><rect x="252" y="66" width="1" height="1" fill="#000080"/><rect x="244" y="67" width="1" height="1" fill="#000080"/><rect x="245" y="67" width="7" height="1" fill="#fff"/><rect x="252" y="67" width="1" height="1" fill="#000080"/><rect x="244" y="68" width="9" height="1" fill="#000080"/><rect x="265" y="55" width="6" height="1" fill="#a0a0a0"/><rect x="262" y="56" width="4" height="1" fill="#a0a0a0"/><rect x="266" y="56" width="4" height="1" fill="#fff"/><rect x="270" y="56" width="4" height="1" fill="#a0a0a0"/><rect x="261" y="57" width="14" height="1" fill="#a0a0a0"/><rect x="261" y="58" width="4" height="1" fill="#a0a0a0"/><rect x="265" y="58" width="6" height="1" fill="#fff"/><rect x="271" y="58" width="4" height="1" fill="#a0a0a0"/><rect x="261" y="59" width="14" height="1" fill="#a0a0a0"/><rect x="261" y="60" width="14" height="1" fill="#a0a0a0"/><rect x="261" y="61" width="14" height="1" fill="#a0a0a0"/><rect x="261" y="62" width="14" height="1" fill="#a0a0a0"/><rect x="261" y="63" width="15" height="1" fill="#a0a0a0"/><rect x="261" y="64" width="7" height="1" fill="#a0a0a0"/><rect x="268" y="64" width="7" height="1" fill="#fff"/><rect x="275" y="64" width="1" height="1" fill="#a0a0a0"/><rect x="261" y="65" width="7" height="1" fill="#a0a0a0"/><rect x="268" y="65" width="1" height="1" fill="#fff"/><rect x="269" y="65" width="3" height="1" fill="#a0a0a0"/><rect x="272" y="65" width="1" height="1" fill="#fff"/><rect x="273" y="65" width="1" height="1" fill="#a0a0a0"/><rect x="274" y="65" width="1" height="1" fill="#fff"/><rect x="275" y="65" width="1" height="1" fill="#a0a0a0"/><rect x="261" y="66" width="7" height="1" fill="#a0a0a0"/><rect x="268" y="66" width="7" height="1" fill="#fff"/><rect x="275" y="66" width="1" height="1" fill="#a0a0a0"/><rect x="262" y="67" width="6" height="1" fill="#a0a0a0"/><rect x="268" y="67" width="1" height="1" fill="#fff"/><rect x="269" y="67" width="5" height="1" fill="#a0a0a0"/><rect x="274" y="67" width="1" height="1" fill="#fff"/><rect x="275" y="67" width="1" height="1" fill="#a0a0a0"/><rect x="268" y="68" width="7" height="1" fill="#fff"/><rect x="275" y="68" width="1" height="1" fill="#a0a0a0"/><rect x="268" y="69" width="8" height="1" fill="#a0a0a0"/><rect x="285" y="56" width="8" height="1" fill="#a0a0a0"/><rect x="285" y="57" width="1" height="1" fill="#a0a0a0"/><rect x="292" y="57" width="2" height="1" fill="#a0a0a0"/><rect x="285" y="58" width="1" height="1" fill="#a0a0a0"/><rect x="287" y="58" width="4" height="1" fill="#c8c8c8"/><rect x="292" y="58" width="1" height="1" fill="#a0a0a0"/><rect x="294" y="58" width="1" height="1" fill="#a0a0a0"/><rect x="285" y="59" width="1" height="1" fill="#a0a0a0"/><rect x="292" y="59" width="4" height="1" fill="#a0a0a0"/><rect x="285" y="60" width="1" height="1" fill="#a0a0a0"/><rect x="287" y="60" width="5" height="1" fill="#c8c8c8"/><rect x="295" y="60" width="1" height="1" fill="#a0a0a0"/><rect x="297" y="60" width="1" height="1" fill="#a0a0a0"/><rect x="298" y="60" width="1" height="1" fill="#c8c8c8"/><rect x="285" y="61" width="1" height="1" fill="#a0a0a0"/><rect x="295" y="61" width="3" height="1" fill="#a0a0a0"/><rect x="298" y="61" width="1" height="1" fill="#c8c8c8"/><rect x="285" y="62" width="1" height="1" fill="#a0a0a0"/><rect x="287" y="62" width="6" height="1" fill="#c8c8c8"/><rect x="294" y="62" width="3" height="1" fill="#a0a0a0"/><rect x="285" y="63" width="1" height="1" fill="#a0a0a0"/><rect x="293" y="63" width="3" height="1" fill="#a0a0a0"/><rect x="285" y="64" width="1" height="1" fill="#a0a0a0"/><rect x="287" y="64" width="5" height="1" fill="#c8c8c8"/><rect x="292" y="64" width="4" height="1" fill="#a0a0a0"/><rect x="285" y="65" width="1" height="1" fill="#a0a0a0"/><rect x="292" y="65" width="1" height="1" fill="#a0a0a0"/><rect x="293" y="65" width="1" height="1" fill="#c8c8c8"/><rect x="295" y="65" width="1" height="1" fill="#a0a0a0"/><rect x="285" y="66" width="1" height="1" fill="#a0a0a0"/><rect x="287" y="66" width="7" height="1" fill="#c8c8c8"/><rect x="295" y="66" width="1" height="1" fill="#a0a0a0"/><rect x="285" y="67" width="1" height="1" fill="#a0a0a0"/><rect x="295" y="67" width="1" height="1" fill="#a0a0a0"/><rect x="285" y="68" width="11" height="1" fill="#a0a0a0"/><rect x="309" y="56" width="4" height="1" fill="#000"/><rect x="309" y="57" width="1" height="1" fill="#000"/><rect x="310" y="57" width="1" height="1" fill="#ffff00"/><rect x="311" y="57" width="1" height="1" fill="#fff"/><rect x="312" y="57" width="1" height="1" fill="#ffff00"/><rect x="313" y="57" width="6" height="1" fill="#000"/><rect x="309" y="58" width="1" height="1" fill="#000"/><rect x="310" y="58" width="1" height="1" fill="#fff"/><rect x="311" y="58" width="1" height="1" fill="#ffff00"/><rect x="312" y="58" width="1" height="1" fill="#fff"/><rect x="313" y="58" width="1" height="1" fill="#ffff00"/><rect x="314" y="58" width="1" height="1" fill="#fff"/><rect x="315" y="58" width="1" height="1" fill="#ffff00"/><rect x="316" y="58" width="1" height="1" fill="#fff"/><rect x="317" y="58" width="1" height="1" fill="#ffff00"/><rect x="318" y="58" width="1" height="1" fill="#000"/><rect x="309" y="59" width="1" height="1" fill="#000"/><rect x="310" y="59" width="1" height="1" fill="#ffff00"/><rect x="311" y="59" width="1" height="1" fill="#fff"/><rect x="312" y="59" width="1" height="1" fill="#ffff00"/><rect x="313" y="59" width="9" height="1" fill="#000"/><rect x="309" y="60" width="1" height="1" fill="#000"/><rect x="310" y="60" width="1" height="1" fill="#fff"/><rect x="311" y="60" width="1" height="1" fill="#ffff00"/><rect x="312" y="60" width="1" height="1" fill="#000"/><rect x="313" y="60" width="7" height="1" fill="#808000"/><rect x="320" y="60" width="1" height="1" fill="#000"/><rect x="309" y="61" width="1" height="1" fill="#000"/><rect x="310" y="61" width="1" height="1" fill="#ffff00"/><rect x="311" y="61" width="1" height="1" fill="#000"/><rect x="312" y="61" width="7" height="1" fill="#808000"/><rect x="319" y="61" width="1" height="1" fill="#000"/><rect x="309" y="62" width="10" height="1" fill="#000"/><rect x="311" y="64" width="11" height="1" fill="#000"/><rect x="310" y="65" width="1" height="1" fill="#000"/><rect x="311" y="65" width="9" height="1" fill="#808000"/><rect x="320" y="65" width="1" height="1" fill="#000"/><rect x="309" y="66" width="1" height="1" fill="#000"/><rect x="310" y="66" width="9" height="1" fill="#808000"/><rect x="319" y="66" width="1" height="1" fill="#000"/><rect x="308" y="67" width="1" height="1" fill="#000"/><rect x="309" y="67" width="9" height="1" fill="#808000"/><rect x="318" y="67" width="1" height="1" fill="#000"/><rect x="307" y="68" width="12" height="1" fill="#000"/><rect x="332" y="56" width="11" height="1" fill="#000"/><rect x="332" y="57" width="1" height="1" fill="#000"/><rect x="333" y="57" width="1" height="1" fill="#808000"/><rect x="334" y="57" width="1" height="1" fill="#000"/><rect x="335" y="57" width="5" height="1" fill="#fff"/><rect x="340" y="57" width="1" height="1" fill="#000"/><rect x="341" y="57" width="1" height="1" fill="#808000"/><rect x="342" y="57" width="1" height="1" fill="#000"/><rect x="332" y="58" width="1" height="1" fill="#000"/><rect x="333" y="58" width="1" height="1" fill="#808000"/><rect x="334" y="58" width="1" height="1" fill="#000"/><rect x="335" y="58" width="5" height="1" fill="#fff"/><rect x="340" y="58" width="3" height="1" fill="#000"/><rect x="332" y="59" width="1" height="1" fill="#000"/><rect x="333" y="59" width="1" height="1" fill="#808000"/><rect x="334" y="59" width="1" height="1" fill="#000"/><rect x="335" y="59" width="5" height="1" fill="#fff"/><rect x="340" y="59" width="1" height="1" fill="#000"/><rect x="341" y="59" width="1" height="1" fill="#808000"/><rect x="342" y="59" width="1" height="1" fill="#000"/><rect x="332" y="60" width="1" height="1" fill="#000"/><rect x="333" y="60" width="2" height="1" fill="#808000"/><rect x="335" y="60" width="5" height="1" fill="#000"/><rect x="340" y="60" width="2" height="1" fill="#808000"/><rect x="342" y="60" width="1" height="1" fill="#000"/><rect x="332" y="61" width="1" height="1" fill="#000"/><rect x="333" y="61" width="9" height="1" fill="#808000"/><rect x="342" y="61" width="1" height="1" fill="#000"/><rect x="332" y="62" width="1" height="1" fill="#000"/><rect x="333" y="62" width="2" height="1" fill="#808000"/><rect x="335" y="62" width="3" height="1" fill="#000"/><rect x="338" y="62" width="1" height="1" fill="#fff"/><rect x="339" y="62" width="1" height="1" fill="#000"/><rect x="340" y="62" width="2" height="1" fill="#808000"/><rect x="342" y="62" width="1" height="1" fill="#000"/><rect x="332" y="63" width="1" height="1" fill="#000"/><rect x="333" y="63" width="2" height="1" fill="#808000"/><rect x="335" y="63" width="3" height="1" fill="#000"/><rect x="338" y="63" width="1" height="1" fill="#fff"/><rect x="339" y="63" width="1" height="1" fill="#000"/><rect x="340" y="63" width="2" height="1" fill="#808000"/><rect x="342" y="63" width="1" height="1" fill="#000"/><rect x="332" y="64" width="11" height="1" fill="#000"/><rect x="334" y="65" width="11" height="1" fill="#000"/><rect x="333" y="66" width="1" height="1" fill="#000"/><rect x="334" y="66" width="9" height="1" fill="#808000"/><rect x="343" y="66" width="1" height="1" fill="#000"/><rect x="332" y="67" width="1" height="1" fill="#000"/><rect x="333" y="67" width="9" height="1" fill="#808000"/><rect x="342" y="67" width="1" height="1" fill="#000"/><rect x="331" y="68" width="1" height="1" fill="#000"/><rect x="332" y="68" width="9" height="1" fill="#808000"/><rect x="341" y="68" width="1" height="1" fill="#000"/><rect x="330" y="69" width="12" height="1" fill="#000"/><rect x="352" y="57" width="13" height="1" fill="#ff0000"/><rect x="354" y="58" width="1" height="1" fill="#c8c8c8"/><rect x="359" y="58" width="1" height="1" fill="#c8c8c8"/><rect x="364" y="58" width="1" height="1" fill="#ff0000"/><rect x="354" y="59" width="1" height="1" fill="#c8c8c8"/><rect x="359" y="59" width="1" height="1" fill="#c8c8c8"/><rect x="364" y="59" width="1" height="1" fill="#ff0000"/><rect x="354" y="60" width="1" height="1" fill="#c8c8c8"/><rect x="355" y="60" width="3" height="1" fill="#a0a0a0"/><rect x="359" y="60" width="1" height="1" fill="#c8c8c8"/><rect x="360" y="60" width="3" height="1" fill="#a0a0a0"/><rect x="364" y="60" width="1" height="1" fill="#ff0000"/><rect x="365" y="60" width="3" height="1" fill="#0000ff"/><rect x="354" y="61" width="1" height="1" fill="#c8c8c8"/><rect x="356" y="61" width="2" height="1" fill="#a0a0a0"/><rect x="359" y="61" width="1" height="1" fill="#c8c8c8"/><rect x="361" y="61" width="2" height="1" fill="#a0a0a0"/><rect x="364" y="61" width="1" height="1" fill="#ff0000"/><rect x="366" y="61" width="2" height="1" fill="#0000ff"/><rect x="354" y="62" width="1" height="1" fill="#c8c8c8"/><rect x="359" y="62" width="1" height="1" fill="#c8c8c8"/><rect x="364" y="62" width="1" height="1" fill="#ff0000"/><rect x="354" y="63" width="1" height="1" fill="#c8c8c8"/><rect x="355" y="63" width="3" height="1" fill="#a0a0a0"/><rect x="359" y="63" width="1" height="1" fill="#c8c8c8"/><rect x="360" y="63" width="3" height="1" fill="#a0a0a0"/><rect x="364" y="63" width="1" height="1" fill="#ff0000"/><rect x="365" y="63" width="3" height="1" fill="#a0a0a0"/><rect x="354" y="64" width="1" height="1" fill="#c8c8c8"/><rect x="356" y="64" width="2" height="1" fill="#a0a0a0"/><rect x="359" y="64" width="1" height="1" fill="#c8c8c8"/><rect x="361" y="64" width="2" height="1" fill="#a0a0a0"/><rect x="364" y="64" width="1" height="1" fill="#ff0000"/><rect x="366" y="64" width="2" height="1" fill="#a0a0a0"/><rect x="354" y="65" width="1" height="1" fill="#c8c8c8"/><rect x="359" y="65" width="1" height="1" fill="#c8c8c8"/><rect x="364" y="65" width="1" height="1" fill="#ff0000"/><rect x="354" y="66" width="1" height="1" fill="#c8c8c8"/><rect x="359" y="66" width="1" height="1" fill="#c8c8c8"/><rect x="364" y="66" width="1" height="1" fill="#ff0000"/><rect x="352" y="67" width="13" height="1" fill="#ff0000"/><rect x="384" y="56" width="7" height="1" fill="#008000"/><rect x="385" y="57" width="1" height="1" fill="#008000"/><rect x="390" y="57" width="1" height="1" fill="#008000"/><rect x="385" y="58" width="1" height="1" fill="#008000"/><rect x="390" y="58" width="1" height="1" fill="#008000"/><rect x="395" y="58" width="1" height="1" fill="#ff0000"/><rect x="385" y="59" width="1" height="1" fill="#008000"/><rect x="386" y="59" width="3" height="1" fill="#0000ff"/><rect x="390" y="59" width="1" height="1" fill="#008000"/><rect x="391" y="59" width="3" height="1" fill="#0000ff"/><rect x="394" y="59" width="3" height="1" fill="#ff0000"/><rect x="385" y="60" width="1" height="1" fill="#008000"/><rect x="387" y="60" width="2" height="1" fill="#0000ff"/><rect x="390" y="60" width="1" height="1" fill="#008000"/><rect x="392" y="60" width="1" height="1" fill="#0000ff"/><rect x="393" y="60" width="5" height="1" fill="#ff0000"/><rect x="385" y="61" width="1" height="1" fill="#008000"/><rect x="390" y="61" width="1" height="1" fill="#008000"/><rect x="392" y="61" width="7" height="1" fill="#ff0000"/><rect x="385" y="62" width="1" height="1" fill="#008000"/><rect x="386" y="62" width="3" height="1" fill="#0000ff"/><rect x="390" y="62" width="1" height="1" fill="#008000"/><rect x="391" y="62" width="3" height="1" fill="#0000ff"/><rect x="394" y="62" width="3" height="1" fill="#ff0000"/><rect x="385" y="63" width="1" height="1" fill="#008000"/><rect x="387" y="63" width="2" height="1" fill="#0000ff"/><rect x="390" y="63" width="1" height="1" fill="#008000"/><rect x="392" y="63" width="2" height="1" fill="#0000ff"/><rect x="394" y="63" width="3" height="1" fill="#ff0000"/><rect x="385" y="64" width="1" height="1" fill="#008000"/><rect x="390" y="64" width="1" height="1" fill="#008000"/><rect x="394" y="64" width="3" height="1" fill="#ff0000"/><rect x="385" y="65" width="1" height="1" fill="#008000"/><rect x="386" y="65" width="3" height="1" fill="#0000ff"/><rect x="390" y="65" width="1" height="1" fill="#008000"/><rect x="391" y="65" width="3" height="1" fill="#0000ff"/><rect x="394" y="65" width="3" height="1" fill="#ff0000"/><rect x="385" y="66" width="1" height="1" fill="#008000"/><rect x="387" y="66" width="2" height="1" fill="#0000ff"/><rect x="390" y="66" width="1" height="1" fill="#008000"/><rect x="392" y="66" width="2" height="1" fill="#0000ff"/><rect x="394" y="66" width="3" height="1" fill="#ff0000"/><rect x="385" y="67" width="1" height="1" fill="#008000"/><rect x="390" y="67" width="1" height="1" fill="#008000"/><rect x="394" y="67" width="3" height="1" fill="#ff0000"/><rect x="384" y="68" width="7" height="1" fill="#008000"/><rect x="408" y="55" width="2" height="1" fill="#a0a0a0"/><rect x="408" y="56" width="2" height="1" fill="#a0a0a0"/><rect x="411" y="56" width="1" height="1" fill="#c8c8c8"/><rect x="412" y="56" width="2" height="1" fill="#a0a0a0"/><rect x="414" y="56" width="1" height="1" fill="#c8c8c8"/><rect x="408" y="57" width="4" height="1" fill="#a0a0a0"/><rect x="414" y="57" width="1" height="1" fill="#a0a0a0"/><rect x="418" y="57" width="1" height="1" fill="#c8c8c8"/><rect x="408" y="58" width="2" height="1" fill="#a0a0a0"/><rect x="411" y="58" width="1" height="1" fill="#c8c8c8"/><rect x="414" y="58" width="1" height="1" fill="#a0a0a0"/><rect x="417" y="58" width="3" height="1" fill="#a0a0a0"/><rect x="408" y="59" width="2" height="1" fill="#a0a0a0"/><rect x="411" y="59" width="1" height="1" fill="#c8c8c8"/><rect x="412" y="59" width="2" height="1" fill="#a0a0a0"/><rect x="414" y="59" width="1" height="1" fill="#c8c8c8"/><rect x="416" y="59" width="5" height="1" fill="#a0a0a0"/><rect x="408" y="60" width="2" height="1" fill="#a0a0a0"/><rect x="415" y="60" width="1" height="1" fill="#c8c8c8"/><rect x="416" y="60" width="5" height="1" fill="#a0a0a0"/><rect x="421" y="60" width="1" height="1" fill="#c8c8c8"/><rect x="408" y="61" width="2" height="1" fill="#a0a0a0"/><rect x="411" y="61" width="1" height="1" fill="#c8c8c8"/><rect x="412" y="61" width="2" height="1" fill="#a0a0a0"/><rect x="414" y="61" width="1" height="1" fill="#c8c8c8"/><rect x="417" y="61" width="3" height="1" fill="#a0a0a0"/><rect x="408" y="62" width="4" height="1" fill="#a0a0a0"/><rect x="414" y="62" width="1" height="1" fill="#a0a0a0"/><rect x="417" y="62" width="3" height="1" fill="#a0a0a0"/><rect x="408" y="63" width="2" height="1" fill="#a0a0a0"/><rect x="411" y="63" width="1" height="1" fill="#c8c8c8"/><rect x="414" y="63" width="1" height="1" fill="#a0a0a0"/><rect x="417" y="63" width="3" height="1" fill="#a0a0a0"/><rect x="408" y="64" width="2" height="1" fill="#a0a0a0"/><rect x="411" y="64" width="1" height="1" fill="#c8c8c8"/><rect x="412" y="64" width="2" height="1" fill="#a0a0a0"/><rect x="414" y="64" width="1" height="1" fill="#c8c8c8"/><rect x="417" y="64" width="3" height="1" fill="#a0a0a0"/><rect x="408" y="65" width="2" height="1" fill="#a0a0a0"/><rect x="417" y="65" width="3" height="1" fill="#a0a0a0"/><rect x="408" y="66" width="2" height="1" fill="#a0a0a0"/><rect x="411" y="66" width="1" height="1" fill="#c8c8c8"/><rect x="412" y="66" width="2" height="1" fill="#a0a0a0"/><rect x="414" y="66" width="1" height="1" fill="#c8c8c8"/><rect x="417" y="66" width="3" height="1" fill="#a0a0a0"/><rect x="408" y="67" width="4" height="1" fill="#a0a0a0"/><rect x="414" y="67" width="1" height="1" fill="#a0a0a0"/><rect x="408" y="68" width="2" height="1" fill="#a0a0a0"/><rect x="411" y="68" width="1" height="1" fill="#c8c8c8"/><rect x="414" y="68" width="1" height="1" fill="#a0a0a0"/><rect x="408" y="69" width="2" height="1" fill="#a0a0a0"/><rect x="411" y="69" width="1" height="1" fill="#c8c8c8"/><rect x="412" y="69" width="2" height="1" fill="#a0a0a0"/><rect x="414" y="69" width="1" height="1" fill="#c8c8c8"/><rect x="437" y="56" width="1" height="1" fill="#a0a0a0"/><rect x="436" y="57" width="3" height="1" fill="#a0a0a0"/><rect x="435" y="58" width="5" height="1" fill="#a0a0a0"/><rect x="434" y="59" width="1" height="1" fill="#c8c8c8"/><rect x="435" y="59" width="5" height="1" fill="#a0a0a0"/><rect x="440" y="59" width="1" height="1" fill="#c8c8c8"/><rect x="436" y="60" width="3" height="1" fill="#a0a0a0"/><rect x="430" y="62" width="14" height="1" fill="#a0a0a0"/><rect x="434" y="63" width="1" height="1" fill="#a0a0a0"/><rect x="441" y="63" width="1" height="1" fill="#a0a0a0"/><rect x="430" y="64" width="1" height="1" fill="#c8c8c8"/><rect x="432" y="64" width="1" height="1" fill="#c8c8c8"/><rect x="434" y="64" width="1" height="1" fill="#a0a0a0"/><rect x="441" y="64" width="1" height="1" fill="#a0a0a0"/><rect x="434" y="65" width="1" height="1" fill="#a0a0a0"/><rect x="441" y="65" width="1" height="1" fill="#a0a0a0"/><rect x="432" y="66" width="5" height="1" fill="#a0a0a0"/><rect x="437" y="66" width="1" height="1" fill="#c8c8c8"/><rect x="439" y="66" width="5" height="1" fill="#a0a0a0"/><rect x="444" y="66" width="1" height="1" fill="#c8c8c8"/><rect x="432" y="67" width="1" height="1" fill="#a0a0a0"/><rect x="437" y="67" width="1" height="1" fill="#a0a0a0"/><rect x="439" y="67" width="1" height="1" fill="#a0a0a0"/><rect x="444" y="67" width="1" height="1" fill="#a0a0a0"/><rect x="432" y="68" width="1" height="1" fill="#a0a0a0"/><rect x="437" y="68" width="1" height="1" fill="#a0a0a0"/><rect x="439" y="68" width="1" height="1" fill="#a0a0a0"/><rect x="444" y="68" width="1" height="1" fill="#a0a0a0"/><rect x="432" y="69" width="6" height="1" fill="#a0a0a0"/><rect x="439" y="69" width="6" height="1" fill="#a0a0a0"/><rect x="460" y="56" width="2" height="1" fill="#a0a0a0"/><rect x="459" y="57" width="4" height="1" fill="#a0a0a0"/><rect x="458" y="58" width="6" height="1" fill="#a0a0a0"/><rect x="457" y="59" width="1" height="1" fill="#c8c8c8"/><rect x="458" y="59" width="6" height="1" fill="#a0a0a0"/><rect x="464" y="59" width="1" height="1" fill="#c8c8c8"/><rect x="459" y="60" width="4" height="1" fill="#a0a0a0"/><rect x="453" y="62" width="16" height="1" fill="#a0a0a0"/><rect x="455" y="63" width="1" height="1" fill="#a0a0a0"/><rect x="466" y="63" width="1" height="1" fill="#a0a0a0"/><rect x="455" y="64" width="1" height="1" fill="#a0a0a0"/><rect x="459" y="64" width="7" height="1" fill="#c8c8c8"/><rect x="466" y="64" width="1" height="1" fill="#a0a0a0"/><rect x="455" y="65" width="1" height="1" fill="#a0a0a0"/><rect x="457" y="65" width="7" height="1" fill="#a0a0a0"/><rect x="466" y="65" width="1" height="1" fill="#a0a0a0"/><rect x="455" y="66" width="3" height="1" fill="#a0a0a0"/><rect x="463" y="66" width="4" height="1" fill="#a0a0a0"/><rect x="457" y="67" width="1" height="1" fill="#a0a0a0"/><rect x="463" y="67" width="1" height="1" fill="#a0a0a0"/><rect x="457" y="68" width="1" height="1" fill="#a0a0a0"/><rect x="463" y="68" width="1" height="1" fill="#a0a0a0"/><rect x="457" y="69" width="7" height="1" fill="#a0a0a0"/><rect x="482" y="56" width="2" height="1" fill="#a0a0a0"/><rect x="481" y="57" width="4" height="1" fill="#a0a0a0"/><rect x="480" y="58" width="6" height="1" fill="#a0a0a0"/><rect x="479" y="59" width="1" height="1" fill="#c8c8c8"/><rect x="480" y="59" width="6" height="1" fill="#a0a0a0"/><rect x="486" y="59" width="1" height="1" fill="#c8c8c8"/><rect x="481" y="60" width="4" height="1" fill="#a0a0a0"/><rect x="480" y="62" width="1" height="1" fill="#c8c8c8"/><rect x="481" y="62" width="3" height="1" fill="#a0a0a0"/><rect x="484" y="62" width="1" height="1" fill="#c8c8c8"/><rect x="481" y="63" width="1" height="1" fill="#c8c8c8"/><rect x="482" y="63" width="1" height="1" fill="#a0a0a0"/><rect x="475" y="64" width="12" height="1" fill="#a0a0a0"/><rect x="475" y="65" width="12" height="1" fill="#a0a0a0"/><rect x="487" y="65" width="1" height="1" fill="#c8c8c8"/><rect x="481" y="66" width="1" height="1" fill="#c8c8c8"/><rect x="482" y="66" width="1" height="1" fill="#a0a0a0"/><rect x="485" y="66" width="2" height="1" fill="#a0a0a0"/><rect x="487" y="66" width="1" height="1" fill="#c8c8c8"/><rect x="480" y="67" width="1" height="1" fill="#c8c8c8"/><rect x="481" y="67" width="3" height="1" fill="#a0a0a0"/><rect x="484" y="67" width="1" height="1" fill="#c8c8c8"/><rect x="486" y="67" width="5" height="1" fill="#a0a0a0"/><rect x="486" y="68" width="1" height="1" fill="#c8c8c8"/><rect x="487" y="68" width="4" height="1" fill="#a0a0a0"/><rect x="530" y="56" width="4" height="1" fill="#ff0000"/><rect x="535" y="56" width="3" height="1" fill="#ff0000"/><rect x="539" y="56" width="3" height="1" fill="#ff0000"/><rect x="543" y="56" width="4" height="1" fill="#ff0000"/><rect x="530" y="57" width="4" height="1" fill="#ff0000"/><rect x="535" y="57" width="3" height="1" fill="#ff0000"/><rect x="539" y="57" width="3" height="1" fill="#ff0000"/><rect x="543" y="57" width="4" height="1" fill="#ff0000"/><rect x="530" y="58" width="4" height="1" fill="#ff0000"/><rect x="535" y="58" width="3" height="1" fill="#ff0000"/><rect x="539" y="58" width="3" height="1" fill="#ff0000"/><rect x="543" y="58" width="4" height="1" fill="#ff0000"/><rect x="532" y="60" width="13" height="1" fill="#008000"/><rect x="532" y="61" width="1" height="1" fill="#008000"/><rect x="533" y="61" width="11" height="1" fill="#fff"/><rect x="544" y="61" width="1" height="1" fill="#008000"/><rect x="532" y="62" width="1" height="1" fill="#008000"/><rect x="533" y="62" width="1" height="1" fill="#fff"/><rect x="534" y="62" width="1" height="1" fill="#0000ff"/><rect x="535" y="62" width="1" height="1" fill="#fff"/><rect x="536" y="62" width="1" height="1" fill="#0000ff"/><rect x="537" y="62" width="1" height="1" fill="#fff"/><rect x="538" y="62" width="1" height="1" fill="#0000ff"/><rect x="539" y="62" width="1" height="1" fill="#fff"/><rect x="540" y="62" width="1" height="1" fill="#0000ff"/><rect x="541" y="62" width="1" height="1" fill="#fff"/><rect x="542" y="62" width="1" height="1" fill="#0000ff"/><rect x="543" y="62" width="1" height="1" fill="#fff"/><rect x="544" y="62" width="1" height="1" fill="#008000"/><rect x="532" y="63" width="1" height="1" fill="#008000"/><rect x="533" y="63" width="1" height="1" fill="#fff"/><rect x="534" y="63" width="9" height="1" fill="#0000ff"/><rect x="543" y="63" width="1" height="1" fill="#fff"/><rect x="544" y="63" width="1" height="1" fill="#008000"/><rect x="532" y="64" width="1" height="1" fill="#008000"/><rect x="533" y="64" width="1" height="1" fill="#fff"/><rect x="534" y="64" width="1" height="1" fill="#0000ff"/><rect x="535" y="64" width="1" height="1" fill="#fff"/><rect x="536" y="64" width="1" height="1" fill="#0000ff"/><rect x="537" y="64" width="1" height="1" fill="#fff"/><rect x="538" y="64" width="1" height="1" fill="#0000ff"/><rect x="539" y="64" width="1" height="1" fill="#fff"/><rect x="540" y="64" width="3" height="1" fill="#0000ff"/><rect x="543" y="64" width="1" height="1" fill="#fff"/><rect x="544" y="64" width="1" height="1" fill="#008000"/><rect x="532" y="65" width="1" height="1" fill="#008000"/><rect x="533" y="65" width="1" height="1" fill="#fff"/><rect x="534" y="65" width="9" height="1" fill="#0000ff"/><rect x="543" y="65" width="1" height="1" fill="#fff"/><rect x="544" y="65" width="1" height="1" fill="#008000"/><rect x="532" y="66" width="1" height="1" fill="#008000"/><rect x="533" y="66" width="1" height="1" fill="#fff"/><rect x="534" y="66" width="1" height="1" fill="#0000ff"/><rect x="535" y="66" width="1" height="1" fill="#fff"/><rect x="536" y="66" width="1" height="1" fill="#0000ff"/><rect x="537" y="66" width="1" height="1" fill="#fff"/><rect x="538" y="66" width="1" height="1" fill="#0000ff"/><rect x="539" y="66" width="1" height="1" fill="#fff"/><rect x="540" y="66" width="3" height="1" fill="#0000ff"/><rect x="543" y="66" width="1" height="1" fill="#fff"/><rect x="544" y="66" width="1" height="1" fill="#008000"/><rect x="532" y="67" width="1" height="1" fill="#008000"/><rect x="533" y="67" width="11" height="1" fill="#fff"/><rect x="544" y="67" width="1" height="1" fill="#008000"/><rect x="532" y="68" width="13" height="1" fill="#008000"/><rect x="555" y="56" width="13" height="1" fill="#008000"/><rect x="555" y="57" width="1" height="1" fill="#008000"/><rect x="556" y="57" width="11" height="1" fill="#fff"/><rect x="567" y="57" width="1" height="1" fill="#008000"/><rect x="555" y="58" width="1" height="1" fill="#008000"/><rect x="556" y="58" width="1" height="1" fill="#fff"/><rect x="557" y="58" width="1" height="1" fill="#0000ff"/><rect x="558" y="58" width="1" height="1" fill="#fff"/><rect x="559" y="58" width="1" height="1" fill="#0000ff"/><rect x="560" y="58" width="1" height="1" fill="#fff"/><rect x="561" y="58" width="1" height="1" fill="#0000ff"/><rect x="562" y="58" width="1" height="1" fill="#fff"/><rect x="563" y="58" width="1" height="1" fill="#0000ff"/><rect x="564" y="58" width="1" height="1" fill="#fff"/><rect x="565" y="58" width="1" height="1" fill="#0000ff"/><rect x="566" y="58" width="1" height="1" fill="#fff"/><rect x="567" y="58" width="1" height="1" fill="#008000"/><rect x="555" y="59" width="1" height="1" fill="#008000"/><rect x="556" y="59" width="1" height="1" fill="#fff"/><rect x="557" y="59" width="9" height="1" fill="#0000ff"/><rect x="566" y="59" width="1" height="1" fill="#fff"/><rect x="567" y="59" width="1" height="1" fill="#008000"/><rect x="555" y="60" width="1" height="1" fill="#008000"/><rect x="556" y="60" width="1" height="1" fill="#fff"/><rect x="557" y="60" width="1" height="1" fill="#0000ff"/><rect x="558" y="60" width="1" height="1" fill="#fff"/><rect x="559" y="60" width="1" height="1" fill="#0000ff"/><rect x="560" y="60" width="1" height="1" fill="#fff"/><rect x="561" y="60" width="1" height="1" fill="#0000ff"/><rect x="562" y="60" width="1" height="1" fill="#fff"/><rect x="563" y="60" width="3" height="1" fill="#0000ff"/><rect x="566" y="60" width="1" height="1" fill="#fff"/><rect x="567" y="60" width="1" height="1" fill="#008000"/><rect x="555" y="61" width="1" height="1" fill="#008000"/><rect x="556" y="61" width="1" height="1" fill="#fff"/><rect x="557" y="61" width="9" height="1" fill="#0000ff"/><rect x="566" y="61" width="1" height="1" fill="#fff"/><rect x="567" y="61" width="1" height="1" fill="#008000"/><rect x="555" y="62" width="1" height="1" fill="#008000"/><rect x="556" y="62" width="1" height="1" fill="#fff"/><rect x="557" y="62" width="1" height="1" fill="#0000ff"/><rect x="558" y="62" width="1" height="1" fill="#fff"/><rect x="559" y="62" width="1" height="1" fill="#0000ff"/><rect x="560" y="62" width="1" height="1" fill="#fff"/><rect x="561" y="62" width="1" height="1" fill="#0000ff"/><rect x="562" y="62" width="1" height="1" fill="#fff"/><rect x="563" y="62" width="3" height="1" fill="#0000ff"/><rect x="566" y="62" width="1" height="1" fill="#fff"/><rect x="567" y="62" width="1" height="1" fill="#008000"/><rect x="555" y="63" width="1" height="1" fill="#008000"/><rect x="556" y="63" width="11" height="1" fill="#fff"/><rect x="567" y="63" width="1" height="1" fill="#008000"/><rect x="555" y="64" width="13" height="1" fill="#008000"/><rect x="553" y="66" width="17" height="1" fill="#ff0000"/><rect x="553" y="67" width="17" height="1" fill="#ff0000"/><rect x="553" y="68" width="17" height="1" fill="#ff0000"/><rect x="579" y="57" width="3" height="1" fill="#808000"/><rect x="586" y="57" width="3" height="1" fill="#808000"/><rect x="578" y="58" width="1" height="1" fill="#808000"/><rect x="579" y="58" width="3" height="1" fill="#fff"/><rect x="582" y="58" width="1" height="1" fill="#808000"/><rect x="585" y="58" width="1" height="1" fill="#808000"/><rect x="586" y="58" width="3" height="1" fill="#fff"/><rect x="589" y="58" width="1" height="1" fill="#808000"/><rect x="577" y="59" width="1" height="1" fill="#808000"/><rect x="578" y="59" width="5" height="1" fill="#fff"/><rect x="583" y="59" width="2" height="1" fill="#808000"/><rect x="585" y="59" width="5" height="1" fill="#fff"/><rect x="590" y="59" width="1" height="1" fill="#808000"/><rect x="577" y="60" width="1" height="1" fill="#808000"/><rect x="578" y="60" width="5" height="1" fill="#fff"/><rect x="583" y="60" width="2" height="1" fill="#808000"/><rect x="585" y="60" width="5" height="1" fill="#fff"/><rect x="590" y="60" width="1" height="1" fill="#808000"/><rect x="577" y="61" width="1" height="1" fill="#808000"/><rect x="578" y="61" width="5" height="1" fill="#fff"/><rect x="583" y="61" width="2" height="1" fill="#808000"/><rect x="585" y="61" width="5" height="1" fill="#fff"/><rect x="590" y="61" width="1" height="1" fill="#808000"/><rect x="577" y="62" width="1" height="1" fill="#808000"/><rect x="578" y="62" width="5" height="1" fill="#fff"/><rect x="583" y="62" width="2" height="1" fill="#808000"/><rect x="585" y="62" width="5" height="1" fill="#fff"/><rect x="590" y="62" width="1" height="1" fill="#808000"/><rect x="577" y="63" width="1" height="1" fill="#808000"/><rect x="578" y="63" width="5" height="1" fill="#fff"/><rect x="583" y="63" width="2" height="1" fill="#808000"/><rect x="585" y="63" width="5" height="1" fill="#fff"/><rect x="590" y="63" width="1" height="1" fill="#808000"/><rect x="577" y="64" width="1" height="1" fill="#808000"/><rect x="578" y="64" width="5" height="1" fill="#fff"/><rect x="583" y="64" width="2" height="1" fill="#808000"/><rect x="585" y="64" width="5" height="1" fill="#fff"/><rect x="590" y="64" width="1" height="1" fill="#808000"/><rect x="577" y="65" width="1" height="1" fill="#808000"/><rect x="578" y="65" width="5" height="1" fill="#fff"/><rect x="583" y="65" width="2" height="1" fill="#808000"/><rect x="585" y="65" width="5" height="1" fill="#fff"/><rect x="590" y="65" width="1" height="1" fill="#808000"/><rect x="577" y="66" width="1" height="1" fill="#808000"/><rect x="578" y="66" width="2" height="1" fill="#fff"/><rect x="580" y="66" width="2" height="1" fill="#808000"/><rect x="582" y="66" width="1" height="1" fill="#fff"/><rect x="583" y="66" width="2" height="1" fill="#808000"/><rect x="585" y="66" width="1" height="1" fill="#fff"/><rect x="586" y="66" width="2" height="1" fill="#808000"/><rect x="588" y="66" width="2" height="1" fill="#fff"/><rect x="590" y="66" width="1" height="1" fill="#808000"/><rect x="577" y="67" width="1" height="1" fill="#808000"/><rect x="578" y="67" width="1" height="1" fill="#fff"/><rect x="579" y="67" width="1" height="1" fill="#808000"/><rect x="582" y="67" width="4" height="1" fill="#808000"/><rect x="588" y="67" width="1" height="1" fill="#808000"/><rect x="589" y="67" width="1" height="1" fill="#fff"/><rect x="590" y="67" width="1" height="1" fill="#808000"/><rect x="577" y="68" width="2" height="1" fill="#808000"/><rect x="583" y="68" width="2" height="1" fill="#808000"/><rect x="589" y="68" width="2" height="1" fill="#808000"/><rect x="577" y="69" width="1" height="1" fill="#808000"/><rect x="583" y="69" width="2" height="1" fill="#808000"/><rect x="590" y="69" width="1" height="1" fill="#808000"/><rect x="602" y="57" width="3" height="1" fill="#808000"/><rect x="609" y="57" width="3" height="1" fill="#808000"/><rect x="601" y="58" width="1" height="1" fill="#808000"/><rect x="602" y="58" width="3" height="1" fill="#fff"/><rect x="605" y="58" width="1" height="1" fill="#808000"/><rect x="608" y="58" width="1" height="1" fill="#808000"/><rect x="609" y="58" width="3" height="1" fill="#fff"/><rect x="612" y="58" width="1" height="1" fill="#808000"/><rect x="600" y="59" width="1" height="1" fill="#808000"/><rect x="601" y="59" width="5" height="1" fill="#fff"/><rect x="606" y="59" width="2" height="1" fill="#808000"/><rect x="608" y="59" width="5" height="1" fill="#fff"/><rect x="613" y="59" width="1" height="1" fill="#808000"/><rect x="600" y="60" width="1" height="1" fill="#808000"/><rect x="601" y="60" width="5" height="1" fill="#fff"/><rect x="606" y="60" width="2" height="1" fill="#808000"/><rect x="608" y="60" width="5" height="1" fill="#fff"/><rect x="613" y="60" width="1" height="1" fill="#808000"/><rect x="600" y="61" width="1" height="1" fill="#808000"/><rect x="601" y="61" width="5" height="1" fill="#fff"/><rect x="606" y="61" width="2" height="1" fill="#808000"/><rect x="608" y="61" width="5" height="1" fill="#fff"/><rect x="613" y="61" width="1" height="1" fill="#808000"/><rect x="600" y="62" width="1" height="1" fill="#808000"/><rect x="601" y="62" width="5" height="1" fill="#fff"/><rect x="606" y="62" width="2" height="1" fill="#808000"/><rect x="608" y="62" width="5" height="1" fill="#fff"/><rect x="613" y="62" width="1" height="1" fill="#808000"/><rect x="600" y="63" width="1" height="1" fill="#808000"/><rect x="601" y="63" width="5" height="1" fill="#fff"/><rect x="606" y="63" width="2" height="1" fill="#808000"/><rect x="608" y="63" width="5" height="1" fill="#fff"/><rect x="613" y="63" width="1" height="1" fill="#808000"/><rect x="600" y="64" width="1" height="1" fill="#808000"/><rect x="601" y="64" width="5" height="1" fill="#fff"/><rect x="606" y="64" width="2" height="1" fill="#808000"/><rect x="608" y="64" width="5" height="1" fill="#fff"/><rect x="613" y="64" width="1" height="1" fill="#808000"/><rect x="600" y="65" width="1" height="1" fill="#808000"/><rect x="601" y="65" width="5" height="1" fill="#fff"/><rect x="606" y="65" width="2" height="1" fill="#808000"/><rect x="608" y="65" width="5" height="1" fill="#fff"/><rect x="613" y="65" width="1" height="1" fill="#808000"/><rect x="600" y="66" width="1" height="1" fill="#808000"/><rect x="601" y="66" width="2" height="1" fill="#fff"/><rect x="603" y="66" width="2" height="1" fill="#808000"/><rect x="605" y="66" width="1" height="1" fill="#fff"/><rect x="606" y="66" width="2" height="1" fill="#808000"/><rect x="608" y="66" width="1" height="1" fill="#fff"/><rect x="609" y="66" width="2" height="1" fill="#808000"/><rect x="611" y="66" width="2" height="1" fill="#fff"/><rect x="613" y="66" width="1" height="1" fill="#808000"/><rect x="600" y="67" width="1" height="1" fill="#808000"/><rect x="601" y="67" width="1" height="1" fill="#fff"/><rect x="602" y="67" width="1" height="1" fill="#808000"/><rect x="605" y="67" width="4" height="1" fill="#808000"/><rect x="611" y="67" width="1" height="1" fill="#808000"/><rect x="612" y="67" width="1" height="1" fill="#fff"/><rect x="613" y="67" width="1" height="1" fill="#808000"/><rect x="600" y="68" width="2" height="1" fill="#808000"/><rect x="606" y="68" width="2" height="1" fill="#808000"/><rect x="612" y="68" width="2" height="1" fill="#808000"/><rect x="600" y="69" width="1" height="1" fill="#808000"/><rect x="606" y="69" width="2" height="1" fill="#808000"/><rect x="613" y="69" width="1" height="1" fill="#808000"/><path d="M607 60.5h5M607 62.5h5M607 64.5h5" stroke="#000" stroke-width="1"/><rect x="631" y="64" width="17" height="1" fill="#008000"/><rect x="635" y="65" width="1" height="1" fill="#008000"/><rect x="641" y="65" width="1" height="1" fill="#008000"/><rect x="635" y="66" width="1" height="1" fill="#008000"/><rect x="637" y="66" width="3" height="1" fill="#0000ff"/><rect x="641" y="66" width="1" height="1" fill="#008000"/><rect x="643" y="66" width="3" height="1" fill="#0000ff"/><rect x="635" y="67" width="1" height="1" fill="#008000"/><rect x="638" y="67" width="2" height="1" fill="#0000ff"/><rect x="641" y="67" width="1" height="1" fill="#008000"/><rect x="644" y="67" width="2" height="1" fill="#0000ff"/><rect x="635" y="68" width="1" height="1" fill="#008000"/><rect x="641" y="68" width="1" height="1" fill="#008000"/><rect x="631" y="69" width="17" height="1" fill="#008000"/><rect x="654" y="64" width="17" height="1" fill="#008000"/><rect x="658" y="65" width="1" height="1" fill="#008000"/><rect x="664" y="65" width="1" height="1" fill="#008000"/><rect x="658" y="66" width="1" height="1" fill="#008000"/><rect x="660" y="66" width="3" height="1" fill="#0000ff"/><rect x="664" y="66" width="1" height="1" fill="#008000"/><rect x="658" y="67" width="1" height="1" fill="#008000"/><rect x="661" y="67" width="2" height="1" fill="#0000ff"/><rect x="664" y="67" width="1" height="1" fill="#008000"/><rect x="658" y="68" width="1" height="1" fill="#008000"/><rect x="664" y="68" width="1" height="1" fill="#008000"/><rect x="654" y="69" width="17" height="1" fill="#008000"/></svg><svg width="666" height="80" viewBox="0 0 666 80"><path d="M150.6 62 C151.6 59.8,153.8 58.5,156 58.8 C158.4 59.3,159.6 61.6,159 63.9 C158.7 65,158.2 65.8,157.4 66.6" stroke="#000" stroke-width="1.45" fill="none" stroke-linecap="round"/><path d="M146.4 59.8 L146.6 64 L151.2 63.8 L149.4 62z" fill="#000" stroke="#000" stroke-width=".5" stroke-linejoin="round"/><path d="M179.4 62 C178.4 59.8,176.2 58.5,174 58.8 C171.6 59.3,170.4 61.6,171 63.9 C171.3 65,171.8 65.8,172.6 66.6" stroke="#a8a8a8" stroke-width="1.4" fill="none" stroke-linecap="round"/><path d="M183.6 59.8 L183.4 64 L178.8 63.8 L180.6 62z" fill="#a8a8a8" stroke="#a8a8a8" stroke-width=".5" stroke-linejoin="round"/><circle cx="636" cy="59.5" r="2.4" fill="#f0f0f0" stroke="#000" stroke-width="1"/><circle cx="643" cy="59.5" r="2.4" fill="#f0f0f0" stroke="#000" stroke-width="1"/><path d="M638.4 59.5h2.2" stroke="#000" stroke-width="1.1"/></svg><div class="a" style="left:509px;top:53px;height:20px;line-height:20px;font-family:'Liberation Serif',serif;font-weight:bold;font-size:18px;text-shadow:.5px 0 #000">R</div><div class="a" style="left:583.5px;top:54.5px;height:12px;line-height:12px;font-family:'Liberation Mono',monospace;font-weight:bold;font-size:12px">A</div><div class="a" style="left:653px;top:54px;width:13px;overflow:hidden;height:10px;line-height:10px;font-family:'Liberation Sans',sans-serif;font-weight:bold;font-size:10.5px;letter-spacing:0;text-shadow:.4px 0 #000">DN</div>
<div id="cv" class="a"></div><div id="cvb" class="a"></div>
<svg width="668" height="564" viewBox="0 0 668 564" fill="none" font-family="'Liberation Sans','Noto Sans CJK SC',sans-serif"><path d="M269.9 120.5L394.4 120.5" stroke="#ff0000" stroke-width="1.3"/><path d="M270.5 120.5L270.5 219.3" stroke="#ff0000" stroke-width="1.3"/><path d="M272 219.3L394.4 219.3" stroke="#ff0000" stroke-width="1.2"/><path d="M301.5 120.5L301.5 209" stroke="#ff0000" stroke-width="1.3"/><path d="M301.5 213L301.5 219.3" stroke="#ff0000" stroke-width="1.3"/><path d="M347.5 120.5L347.5 209" stroke="#ff0000" stroke-width="1.3"/><path d="M347.5 213L347.5 219.3" stroke="#ff0000" stroke-width="1.3"/><path d="M393.8 120.5L393.8 209" stroke="#ff0000" stroke-width="1.3"/><path d="M393.8 213L393.8 219.3" stroke="#ff0000" stroke-width="1.3"/><path d="M270.5 218.8L259 229.8" stroke="#ff0000" stroke-width="1.2"/><path d="M272.5 219.3L263 228.8" stroke="#ff0000" stroke-width="1.2"/><rect x="287.1" y="135.1" width="6.6" height="5.4" fill="#000" stroke="#ff0000" stroke-width="1.15"/><rect x="309.6" y="135.1" width="6.6" height="5.4" fill="#000" stroke="#ff0000" stroke-width="1.15"/><rect x="293.7" y="136.2" width="15.6" height="3.2" fill="#000" stroke="#ff0000" stroke-width="1.1"/><rect x="294.5" y="136.9" width="2.2" height="1.8" fill="#fff"/><rect x="306.3" y="136.9" width="2.2" height="1.8" fill="#fff"/><text x="300.7" y="128.5" fill="#fff" stroke="#fff" stroke-width=".3" font-size="3.7" text-anchor="end" font-weight="bold">20</text><rect x="287.1" y="159.6" width="6.6" height="5.4" fill="#000" stroke="#ff0000" stroke-width="1.15"/><rect x="309.6" y="159.6" width="6.6" height="5.4" fill="#000" stroke="#ff0000" stroke-width="1.15"/><rect x="293.7" y="160.7" width="15.6" height="3.2" fill="#000" stroke="#ff0000" stroke-width="1.1"/><rect x="294.5" y="161.4" width="2.2" height="1.8" fill="#fff"/><rect x="306.3" y="161.4" width="2.2" height="1.8" fill="#fff"/><text x="300.7" y="150.6" fill="#fff" stroke="#fff" stroke-width=".3" font-size="3.7" text-anchor="end" font-weight="bold">20</text><rect x="287.1" y="184" width="6.6" height="5.4" fill="#000" stroke="#ff0000" stroke-width="1.15"/><rect x="309.6" y="184" width="6.6" height="5.4" fill="#000" stroke="#ff0000" stroke-width="1.15"/><rect x="293.7" y="185.1" width="15.6" height="3.2" fill="#000" stroke="#ff0000" stroke-width="1.1"/><rect x="294.5" y="185.8" width="2.2" height="1.8" fill="#fff"/><rect x="306.3" y="185.8" width="2.2" height="1.8" fill="#fff"/><text x="300.7" y="175" fill="#fff" stroke="#fff" stroke-width=".3" font-size="3.7" text-anchor="end" font-weight="bold">20</text><rect x="287.1" y="208.3" width="6.6" height="5.4" fill="#000" stroke="#ff0000" stroke-width="1.15"/><rect x="309.6" y="208.3" width="6.6" height="5.4" fill="#000" stroke="#ff0000" stroke-width="1.15"/><rect x="293.7" y="209.4" width="15.6" height="3.2" fill="#000" stroke="#ff0000" stroke-width="1.1"/><rect x="294.5" y="210.1" width="2.2" height="1.8" fill="#fff"/><rect x="306.3" y="210.1" width="2.2" height="1.8" fill="#fff"/><text x="300.7" y="199.3" fill="#fff" stroke="#fff" stroke-width=".3" font-size="3.7" text-anchor="end" font-weight="bold">20</text><text x="301.5" y="227.5" fill="#fff" stroke="#fff" stroke-width=".3" font-size="4.8" text-anchor="middle" font-weight="bold">L1</text><text x="302.7" y="217.1" fill="#fff" stroke="#fff" stroke-width=".3" font-size="3.7" text-anchor="start" font-weight="bold">15</text><rect x="333.1" y="135.1" width="6.6" height="5.4" fill="#000" stroke="#ff0000" stroke-width="1.15"/><rect x="355.6" y="135.1" width="6.6" height="5.4" fill="#000" stroke="#ff0000" stroke-width="1.15"/><rect x="339.7" y="136.2" width="15.6" height="3.2" fill="#000" stroke="#ff0000" stroke-width="1.1"/><rect x="340.5" y="136.9" width="2.2" height="1.8" fill="#fff"/><rect x="352.3" y="136.9" width="2.2" height="1.8" fill="#fff"/><text x="346.7" y="128.5" fill="#fff" stroke="#fff" stroke-width=".3" font-size="3.7" text-anchor="end" font-weight="bold">20</text><rect x="333.1" y="159.6" width="6.6" height="5.4" fill="#000" stroke="#ff0000" stroke-width="1.15"/><rect x="355.6" y="159.6" width="6.6" height="5.4" fill="#000" stroke="#ff0000" stroke-width="1.15"/><rect x="339.7" y="160.7" width="15.6" height="3.2" fill="#000" stroke="#ff0000" stroke-width="1.1"/><rect x="340.5" y="161.4" width="2.2" height="1.8" fill="#fff"/><rect x="352.3" y="161.4" width="2.2" height="1.8" fill="#fff"/><text x="346.7" y="150.6" fill="#fff" stroke="#fff" stroke-width=".3" font-size="3.7" text-anchor="end" font-weight="bold">20</text><rect x="333.1" y="184" width="6.6" height="5.4" fill="#000" stroke="#ff0000" stroke-width="1.15"/><rect x="355.6" y="184" width="6.6" height="5.4" fill="#000" stroke="#ff0000" stroke-width="1.15"/><rect x="339.7" y="185.1" width="15.6" height="3.2" fill="#000" stroke="#ff0000" stroke-width="1.1"/><rect x="340.5" y="185.8" width="2.2" height="1.8" fill="#fff"/><rect x="352.3" y="185.8" width="2.2" height="1.8" fill="#fff"/><text x="346.7" y="175" fill="#fff" stroke="#fff" stroke-width=".3" font-size="3.7" text-anchor="end" font-weight="bold">20</text><rect x="333.1" y="208.3" width="6.6" height="5.4" fill="#000" stroke="#ff0000" stroke-width="1.15"/><rect x="355.6" y="208.3" width="6.6" height="5.4" fill="#000" stroke="#ff0000" stroke-width="1.15"/><rect x="339.7" y="209.4" width="15.6" height="3.2" fill="#000" stroke="#ff0000" stroke-width="1.1"/><rect x="340.5" y="210.1" width="2.2" height="1.8" fill="#fff"/><rect x="352.3" y="210.1" width="2.2" height="1.8" fill="#fff"/><text x="346.7" y="199.3" fill="#fff" stroke="#fff" stroke-width=".3" font-size="3.7" text-anchor="end" font-weight="bold">20</text><text x="347.5" y="227.5" fill="#fff" stroke="#fff" stroke-width=".3" font-size="4.8" text-anchor="middle" font-weight="bold">L2</text><text x="348.7" y="217.1" fill="#fff" stroke="#fff" stroke-width=".3" font-size="3.7" text-anchor="start" font-weight="bold">15</text><rect x="379.4" y="135.1" width="6.6" height="5.4" fill="#000" stroke="#ff0000" stroke-width="1.15"/><rect x="401.9" y="135.1" width="6.6" height="5.4" fill="#000" stroke="#ff0000" stroke-width="1.15"/><rect x="386" y="136.2" width="15.6" height="3.2" fill="#000" stroke="#ff0000" stroke-width="1.1"/><rect x="386.8" y="136.9" width="2.2" height="1.8" fill="#fff"/><rect x="398.6" y="136.9" width="2.2" height="1.8" fill="#fff"/><text x="393" y="128.5" fill="#fff" stroke="#fff" stroke-width=".3" font-size="3.7" text-anchor="end" font-weight="bold">20</text><rect x="379.4" y="159.6" width="6.6" height="5.4" fill="#000" stroke="#ff0000" stroke-width="1.15"/><rect x="401.9" y="159.6" width="6.6" height="5.4" fill="#000" stroke="#ff0000" stroke-width="1.15"/><rect x="386" y="160.7" width="15.6" height="3.2" fill="#000" stroke="#ff0000" stroke-width="1.1"/><rect x="386.8" y="161.4" width="2.2" height="1.8" fill="#fff"/><rect x="398.6" y="161.4" width="2.2" height="1.8" fill="#fff"/><text x="393" y="150.6" fill="#fff" stroke="#fff" stroke-width=".3" font-size="3.7" text-anchor="end" font-weight="bold">20</text><rect x="379.4" y="184" width="6.6" height="5.4" fill="#000" stroke="#ff0000" stroke-width="1.15"/><rect x="401.9" y="184" width="6.6" height="5.4" fill="#000" stroke="#ff0000" stroke-width="1.15"/><rect x="386" y="185.1" width="15.6" height="3.2" fill="#000" stroke="#ff0000" stroke-width="1.1"/><rect x="386.8" y="185.8" width="2.2" height="1.8" fill="#fff"/><rect x="398.6" y="185.8" width="2.2" height="1.8" fill="#fff"/><text x="393" y="175" fill="#fff" stroke="#fff" stroke-width=".3" font-size="3.7" text-anchor="end" font-weight="bold">20</text><rect x="379.4" y="208.3" width="6.6" height="5.4" fill="#000" stroke="#ff0000" stroke-width="1.15"/><rect x="401.9" y="208.3" width="6.6" height="5.4" fill="#000" stroke="#ff0000" stroke-width="1.15"/><rect x="386" y="209.4" width="15.6" height="3.2" fill="#000" stroke="#ff0000" stroke-width="1.1"/><rect x="386.8" y="210.1" width="2.2" height="1.8" fill="#fff"/><rect x="398.6" y="210.1" width="2.2" height="1.8" fill="#fff"/><text x="393" y="199.3" fill="#fff" stroke="#fff" stroke-width=".3" font-size="3.7" text-anchor="end" font-weight="bold">20</text><text x="393.8" y="227.5" fill="#fff" stroke="#fff" stroke-width=".3" font-size="4.8" text-anchor="middle" font-weight="bold">L3</text><text x="395" y="217.1" fill="#fff" stroke="#fff" stroke-width=".3" font-size="3.7" text-anchor="start" font-weight="bold">15</text><text x="277.1" y="141.9" fill="#fff" stroke="#fff" stroke-width=".3" font-size="4.6" text-anchor="middle" font-weight="bold">4F</text><path d="M272.9 142.8L281.3 142.8" stroke="#fff" stroke-width="0.9"/><text x="277.1" y="166.4" fill="#fff" stroke="#fff" stroke-width=".3" font-size="4.6" text-anchor="middle" font-weight="bold">3F</text><path d="M272.9 167.3L281.3 167.3" stroke="#fff" stroke-width="0.9"/><text x="277.1" y="190.8" fill="#fff" stroke="#fff" stroke-width=".3" font-size="4.6" text-anchor="middle" font-weight="bold">2F</text><path d="M272.9 191.7L281.3 191.7" stroke="#fff" stroke-width="0.9"/><text x="277.1" y="215.1" fill="#fff" stroke="#fff" stroke-width=".3" font-size="4.6" text-anchor="middle" font-weight="bold">1F</text><path d="M272.9 216L281.3 216" stroke="#fff" stroke-width="0.9"/><text x="328" y="119.3" fill="#fff" stroke="#fff" stroke-width=".3" font-size="3.7" text-anchor="middle" font-weight="bold">25</text><text x="328" y="222.7" fill="#fff" stroke="#fff" stroke-width=".3" font-size="3.7" text-anchor="middle" font-weight="bold">25</text><text x="374.1" y="119.3" fill="#fff" stroke="#fff" stroke-width=".3" font-size="3.7" text-anchor="middle" font-weight="bold">25</text><text x="374.1" y="222.7" fill="#fff" stroke="#fff" stroke-width=".3" font-size="3.7" text-anchor="middle" font-weight="bold">25</text><text x="289" y="222.7" fill="#fff" stroke="#fff" stroke-width=".3" font-size="3.7" text-anchor="middle" font-weight="bold">32</text><text x="266" y="222.9" fill="#fff" stroke="#fff" stroke-width=".3" font-size="3.8" text-anchor="middle" font-weight="bold">40</text><text x="269" y="227.3" fill="#fff" stroke="#fff" stroke-width=".3" font-size="3.8" text-anchor="middle" font-weight="bold">40</text><text x="335" y="229.9" fill="#ff0000" stroke="#ff0000" stroke-width=".3" font-size="6.4" text-anchor="middle" font-weight="bold">H1</text><path d="M475.6 120.6L598 120.6" stroke="#00f000" stroke-width="1.3"/><path d="M476.2 120.6L476.2 219.4" stroke="#00c800" stroke-width="1.3"/><path d="M477.7 219.4L598 219.4" stroke="#ffff00" stroke-width="1.2"/><path d="M507.2 120.6L507.2 209.1" stroke="#00c800" stroke-width="1.3"/><path d="M507.2 213.1L507.2 219.4" stroke="#c8c000" stroke-width="1.3"/><path d="M552.9 120.6L552.9 209.1" stroke="#00c800" stroke-width="1.3"/><path d="M552.9 213.1L552.9 219.4" stroke="#c8c000" stroke-width="1.3"/><path d="M597.4 120.6L597.4 209.1" stroke="#00c800" stroke-width="1.3"/><path d="M597.4 213.1L597.4 219.4" stroke="#c8c000" stroke-width="1.3"/><path d="M476.2 218.9L464.7 229.9" stroke="#00c800" stroke-width="1.2"/><path d="M478.2 219.4L468.7 228.9" stroke="#ffff00" stroke-width="1.2"/><rect x="492.8" y="135.2" width="6.6" height="5.4" fill="#000" stroke="#00ffff" stroke-width="1.15"/><rect x="515.3" y="135.2" width="6.6" height="5.4" fill="#000" stroke="#00ffff" stroke-width="1.15"/><rect x="499.4" y="136.3" width="15.6" height="3.2" fill="#000" stroke="#00ffff" stroke-width="1.1"/><rect x="500.2" y="137" width="2.2" height="1.8" fill="#fff"/><rect x="512" y="137" width="2.2" height="1.8" fill="#fff"/><text x="506.4" y="128.6" fill="#fff" stroke="#fff" stroke-width=".3" font-size="3.7" text-anchor="end" font-weight="bold">20</text><rect x="492.8" y="159.7" width="6.6" height="5.4" fill="#000" stroke="#00ffff" stroke-width="1.15"/><rect x="515.3" y="159.7" width="6.6" height="5.4" fill="#000" stroke="#00ffff" stroke-width="1.15"/><rect x="499.4" y="160.8" width="15.6" height="3.2" fill="#000" stroke="#00ffff" stroke-width="1.1"/><rect x="500.2" y="161.5" width="2.2" height="1.8" fill="#fff"/><rect x="512" y="161.5" width="2.2" height="1.8" fill="#fff"/><text x="506.4" y="150.7" fill="#fff" stroke="#fff" stroke-width=".3" font-size="3.7" text-anchor="end" font-weight="bold">20</text><rect x="492.8" y="184.1" width="6.6" height="5.4" fill="#000" stroke="#00ffff" stroke-width="1.15"/><rect x="515.3" y="184.1" width="6.6" height="5.4" fill="#000" stroke="#00ffff" stroke-width="1.15"/><rect x="499.4" y="185.2" width="15.6" height="3.2" fill="#000" stroke="#00ffff" stroke-width="1.1"/><rect x="500.2" y="185.9" width="2.2" height="1.8" fill="#fff"/><rect x="512" y="185.9" width="2.2" height="1.8" fill="#fff"/><text x="506.4" y="175.1" fill="#fff" stroke="#fff" stroke-width=".3" font-size="3.7" text-anchor="end" font-weight="bold">20</text><rect x="492.8" y="208.4" width="6.6" height="5.4" fill="#000" stroke="#00ffff" stroke-width="1.15"/><rect x="515.3" y="208.4" width="6.6" height="5.4" fill="#000" stroke="#00ffff" stroke-width="1.15"/><rect x="499.4" y="209.5" width="15.6" height="3.2" fill="#000" stroke="#00ffff" stroke-width="1.1"/><rect x="500.2" y="210.2" width="2.2" height="1.8" fill="#fff"/><rect x="512" y="210.2" width="2.2" height="1.8" fill="#fff"/><text x="506.4" y="199.4" fill="#fff" stroke="#fff" stroke-width=".3" font-size="3.7" text-anchor="end" font-weight="bold">20</text><text x="507.2" y="227.6" fill="#fff" stroke="#fff" stroke-width=".3" font-size="4.8" text-anchor="middle" font-weight="bold">L1</text><text x="508.4" y="217.2" fill="#fff" stroke="#fff" stroke-width=".3" font-size="3.7" text-anchor="start" font-weight="bold">15</text><rect x="538.5" y="135.2" width="6.6" height="5.4" fill="#000" stroke="#00ffff" stroke-width="1.15"/><rect x="561" y="135.2" width="6.6" height="5.4" fill="#000" stroke="#00ffff" stroke-width="1.15"/><rect x="545.1" y="136.3" width="15.6" height="3.2" fill="#000" stroke="#00ffff" stroke-width="1.1"/><rect x="545.9" y="137" width="2.2" height="1.8" fill="#fff"/><rect x="557.7" y="137" width="2.2" height="1.8" fill="#fff"/><text x="552.1" y="128.6" fill="#fff" stroke="#fff" stroke-width=".3" font-size="3.7" text-anchor="end" font-weight="bold">20</text><rect x="538.5" y="159.7" width="6.6" height="5.4" fill="#000" stroke="#00ffff" stroke-width="1.15"/><rect x="561" y="159.7" width="6.6" height="5.4" fill="#000" stroke="#00ffff" stroke-width="1.15"/><rect x="545.1" y="160.8" width="15.6" height="3.2" fill="#000" stroke="#00ffff" stroke-width="1.1"/><rect x="545.9" y="161.5" width="2.2" height="1.8" fill="#fff"/><rect x="557.7" y="161.5" width="2.2" height="1.8" fill="#fff"/><text x="552.1" y="150.7" fill="#fff" stroke="#fff" stroke-width=".3" font-size="3.7" text-anchor="end" font-weight="bold">20</text><rect x="538.5" y="184.1" width="6.6" height="5.4" fill="#000" stroke="#00ffff" stroke-width="1.15"/><rect x="561" y="184.1" width="6.6" height="5.4" fill="#000" stroke="#00ffff" stroke-width="1.15"/><rect x="545.1" y="185.2" width="15.6" height="3.2" fill="#000" stroke="#00ffff" stroke-width="1.1"/><rect x="545.9" y="185.9" width="2.2" height="1.8" fill="#fff"/><rect x="557.7" y="185.9" width="2.2" height="1.8" fill="#fff"/><text x="552.1" y="175.1" fill="#fff" stroke="#fff" stroke-width=".3" font-size="3.7" text-anchor="end" font-weight="bold">20</text><rect x="538.5" y="208.4" width="6.6" height="5.4" fill="#000" stroke="#00ffff" stroke-width="1.15"/><rect x="561" y="208.4" width="6.6" height="5.4" fill="#000" stroke="#00ffff" stroke-width="1.15"/><rect x="545.1" y="209.5" width="15.6" height="3.2" fill="#000" stroke="#00ffff" stroke-width="1.1"/><rect x="545.9" y="210.2" width="2.2" height="1.8" fill="#fff"/><rect x="557.7" y="210.2" width="2.2" height="1.8" fill="#fff"/><text x="552.1" y="199.4" fill="#fff" stroke="#fff" stroke-width=".3" font-size="3.7" text-anchor="end" font-weight="bold">20</text><text x="552.9" y="227.6" fill="#fff" stroke="#fff" stroke-width=".3" font-size="4.8" text-anchor="middle" font-weight="bold">L2</text><text x="554.1" y="217.2" fill="#fff" stroke="#fff" stroke-width=".3" font-size="3.7" text-anchor="start" font-weight="bold">15</text><rect x="583" y="135.2" width="6.6" height="5.4" fill="#000" stroke="#00ffff" stroke-width="1.15"/><rect x="605.5" y="135.2" width="6.6" height="5.4" fill="#000" stroke="#00ffff" stroke-width="1.15"/><rect x="589.6" y="136.3" width="15.6" height="3.2" fill="#000" stroke="#00ffff" stroke-width="1.1"/><rect x="590.4" y="137" width="2.2" height="1.8" fill="#fff"/><rect x="602.2" y="137" width="2.2" height="1.8" fill="#fff"/><text x="596.6" y="128.6" fill="#fff" stroke="#fff" stroke-width=".3" font-size="3.7" text-anchor="end" font-weight="bold">20</text><rect x="583" y="159.7" width="6.6" height="5.4" fill="#000" stroke="#00ffff" stroke-width="1.15"/><rect x="605.5" y="159.7" width="6.6" height="5.4" fill="#000" stroke="#00ffff" stroke-width="1.15"/><rect x="589.6" y="160.8" width="15.6" height="3.2" fill="#000" stroke="#00ffff" stroke-width="1.1"/><rect x="590.4" y="161.5" width="2.2" height="1.8" fill="#fff"/><rect x="602.2" y="161.5" width="2.2" height="1.8" fill="#fff"/><text x="596.6" y="150.7" fill="#fff" stroke="#fff" stroke-width=".3" font-size="3.7" text-anchor="end" font-weight="bold">20</text><rect x="583" y="184.1" width="6.6" height="5.4" fill="#000" stroke="#00ffff" stroke-width="1.15"/><rect x="605.5" y="184.1" width="6.6" height="5.4" fill="#000" stroke="#00ffff" stroke-width="1.15"/><rect x="589.6" y="185.2" width="15.6" height="3.2" fill="#000" stroke="#00ffff" stroke-width="1.1"/><rect x="590.4" y="185.9" width="2.2" height="1.8" fill="#fff"/><rect x="602.2" y="185.9" width="2.2" height="1.8" fill="#fff"/><text x="596.6" y="175.1" fill="#fff" stroke="#fff" stroke-width=".3" font-size="3.7" text-anchor="end" font-weight="bold">20</text><rect x="583" y="208.4" width="6.6" height="5.4" fill="#000" stroke="#00ffff" stroke-width="1.15"/><rect x="605.5" y="208.4" width="6.6" height="5.4" fill="#000" stroke="#00ffff" stroke-width="1.15"/><rect x="589.6" y="209.5" width="15.6" height="3.2" fill="#000" stroke="#00ffff" stroke-width="1.1"/><rect x="590.4" y="210.2" width="2.2" height="1.8" fill="#fff"/><rect x="602.2" y="210.2" width="2.2" height="1.8" fill="#fff"/><text x="596.6" y="199.4" fill="#fff" stroke="#fff" stroke-width=".3" font-size="3.7" text-anchor="end" font-weight="bold">20</text><text x="597.4" y="227.6" fill="#fff" stroke="#fff" stroke-width=".3" font-size="4.8" text-anchor="middle" font-weight="bold">L3</text><text x="598.6" y="217.2" fill="#fff" stroke="#fff" stroke-width=".3" font-size="3.7" text-anchor="start" font-weight="bold">15</text><text x="482.8" y="142" fill="#fff" stroke="#fff" stroke-width=".3" font-size="4.6" text-anchor="middle" font-weight="bold">4F</text><path d="M478.6 142.9L487 142.9" stroke="#fff" stroke-width="0.9"/><text x="482.8" y="166.5" fill="#fff" stroke="#fff" stroke-width=".3" font-size="4.6" text-anchor="middle" font-weight="bold">3F</text><path d="M478.6 167.4L487 167.4" stroke="#fff" stroke-width="0.9"/><text x="482.8" y="190.9" fill="#fff" stroke="#fff" stroke-width=".3" font-size="4.6" text-anchor="middle" font-weight="bold">2F</text><path d="M478.6 191.8L487 191.8" stroke="#fff" stroke-width="0.9"/><text x="482.8" y="215.2" fill="#fff" stroke="#fff" stroke-width=".3" font-size="4.6" text-anchor="middle" font-weight="bold">1F</text><path d="M478.6 216.1L487 216.1" stroke="#fff" stroke-width="0.9"/><text x="533.5" y="119.4" fill="#fff" stroke="#fff" stroke-width=".3" font-size="3.7" text-anchor="middle" font-weight="bold">25</text><text x="533.5" y="222.8" fill="#fff" stroke="#fff" stroke-width=".3" font-size="3.7" text-anchor="middle" font-weight="bold">25</text><text x="578.6" y="119.4" fill="#fff" stroke="#fff" stroke-width=".3" font-size="3.7" text-anchor="middle" font-weight="bold">25</text><text x="578.6" y="222.8" fill="#fff" stroke="#fff" stroke-width=".3" font-size="3.7" text-anchor="middle" font-weight="bold">25</text><text x="494.7" y="222.8" fill="#fff" stroke="#fff" stroke-width=".3" font-size="3.7" text-anchor="middle" font-weight="bold">32</text><text x="471.7" y="223" fill="#fff" stroke="#fff" stroke-width=".3" font-size="3.8" text-anchor="middle" font-weight="bold">40</text><text x="474.7" y="227.4" fill="#fff" stroke="#fff" stroke-width=".3" font-size="3.8" text-anchor="middle" font-weight="bold">40</text><text x="540.7" y="230" fill="#ff00ff" stroke="#ff00ff" stroke-width=".3" font-size="6.4" text-anchor="middle" font-weight="bold">H2</text><path d="M270.1 250.5L393.7 250.5" stroke="#00f000" stroke-width="1.3"/><path d="M270.7 250.5L270.7 349.1" stroke="#00c800" stroke-width="1.3"/><path d="M272.2 349.1L393.7 349.1" stroke="#ffff00" stroke-width="1.2"/><path d="M301.3 250.5L301.3 339.6" stroke="#00c800" stroke-width="1.3"/><path d="M301.3 343.6L301.3 349.1" stroke="#c8c000" stroke-width="1.3"/><path d="M347.3 250.5L347.3 339.6" stroke="#00c800" stroke-width="1.3"/><path d="M347.3 343.6L347.3 349.1" stroke="#c8c000" stroke-width="1.3"/><path d="M393.1 250.5L393.1 339.6" stroke="#00c800" stroke-width="1.3"/><path d="M393.1 343.6L393.1 349.1" stroke="#c8c000" stroke-width="1.3"/><path d="M270.7 348.6L259.2 359.6" stroke="#00c800" stroke-width="1.2"/><path d="M272.7 349.1L263.2 358.6" stroke="#ffff00" stroke-width="1.2"/><rect x="286.9" y="264.9" width="6.6" height="5.4" fill="#000" stroke="#00ffff" stroke-width="1.15"/><rect x="309.4" y="264.9" width="6.6" height="5.4" fill="#000" stroke="#00ffff" stroke-width="1.15"/><rect x="293.5" y="266" width="15.6" height="3.2" fill="#000" stroke="#00ffff" stroke-width="1.1"/><rect x="294.3" y="266.7" width="2.2" height="1.8" fill="#fff"/><rect x="306.1" y="266.7" width="2.2" height="1.8" fill="#fff"/><text x="300.5" y="258.3" fill="#fff" stroke="#fff" stroke-width=".3" font-size="3.7" text-anchor="end" font-weight="bold">20</text><rect x="286.9" y="289.8" width="6.6" height="5.4" fill="#000" stroke="#00ffff" stroke-width="1.15"/><rect x="309.4" y="289.8" width="6.6" height="5.4" fill="#000" stroke="#00ffff" stroke-width="1.15"/><rect x="293.5" y="290.9" width="15.6" height="3.2" fill="#000" stroke="#00ffff" stroke-width="1.1"/><rect x="294.3" y="291.6" width="2.2" height="1.8" fill="#fff"/><rect x="306.1" y="291.6" width="2.2" height="1.8" fill="#fff"/><text x="300.5" y="280.8" fill="#fff" stroke="#fff" stroke-width=".3" font-size="3.7" text-anchor="end" font-weight="bold">20</text><rect x="286.9" y="314.1" width="6.6" height="5.4" fill="#000" stroke="#00ffff" stroke-width="1.15"/><rect x="309.4" y="314.1" width="6.6" height="5.4" fill="#000" stroke="#00ffff" stroke-width="1.15"/><rect x="293.5" y="315.2" width="15.6" height="3.2" fill="#000" stroke="#00ffff" stroke-width="1.1"/><rect x="294.3" y="315.9" width="2.2" height="1.8" fill="#fff"/><rect x="306.1" y="315.9" width="2.2" height="1.8" fill="#fff"/><text x="300.5" y="305.1" fill="#fff" stroke="#fff" stroke-width=".3" font-size="3.7" text-anchor="end" font-weight="bold">20</text><rect x="286.9" y="338.9" width="6.6" height="5.4" fill="#000" stroke="#00ffff" stroke-width="1.15"/><rect x="309.4" y="338.9" width="6.6" height="5.4" fill="#000" stroke="#00ffff" stroke-width="1.15"/><rect x="293.5" y="340" width="15.6" height="3.2" fill="#000" stroke="#00ffff" stroke-width="1.1"/><rect x="294.3" y="340.7" width="2.2" height="1.8" fill="#fff"/><rect x="306.1" y="340.7" width="2.2" height="1.8" fill="#fff"/><text x="300.5" y="329.9" fill="#fff" stroke="#fff" stroke-width=".3" font-size="3.7" text-anchor="end" font-weight="bold">20</text><text x="301.3" y="357.3" fill="#fff" stroke="#fff" stroke-width=".3" font-size="4.8" text-anchor="middle" font-weight="bold">L1</text><text x="302.5" y="346.9" fill="#fff" stroke="#fff" stroke-width=".3" font-size="3.7" text-anchor="start" font-weight="bold">15</text><rect x="332.9" y="264.9" width="6.6" height="5.4" fill="#000" stroke="#00ffff" stroke-width="1.15"/><rect x="355.4" y="264.9" width="6.6" height="5.4" fill="#000" stroke="#00ffff" stroke-width="1.15"/><rect x="339.5" y="266" width="15.6" height="3.2" fill="#000" stroke="#00ffff" stroke-width="1.1"/><rect x="340.3" y="266.7" width="2.2" height="1.8" fill="#fff"/><rect x="352.1" y="266.7" width="2.2" height="1.8" fill="#fff"/><text x="346.5" y="258.3" fill="#fff" stroke="#fff" stroke-width=".3" font-size="3.7" text-anchor="end" font-weight="bold">20</text><rect x="332.9" y="289.8" width="6.6" height="5.4" fill="#000" stroke="#00ffff" stroke-width="1.15"/><rect x="355.4" y="289.8" width="6.6" height="5.4" fill="#000" stroke="#00ffff" stroke-width="1.15"/><rect x="339.5" y="290.9" width="15.6" height="3.2" fill="#000" stroke="#00ffff" stroke-width="1.1"/><rect x="340.3" y="291.6" width="2.2" height="1.8" fill="#fff"/><rect x="352.1" y="291.6" width="2.2" height="1.8" fill="#fff"/><text x="346.5" y="280.8" fill="#fff" stroke="#fff" stroke-width=".3" font-size="3.7" text-anchor="end" font-weight="bold">20</text><rect x="332.9" y="314.1" width="6.6" height="5.4" fill="#000" stroke="#00ffff" stroke-width="1.15"/><rect x="355.4" y="314.1" width="6.6" height="5.4" fill="#000" stroke="#00ffff" stroke-width="1.15"/><rect x="339.5" y="315.2" width="15.6" height="3.2" fill="#000" stroke="#00ffff" stroke-width="1.1"/><rect x="340.3" y="315.9" width="2.2" height="1.8" fill="#fff"/><rect x="352.1" y="315.9" width="2.2" height="1.8" fill="#fff"/><text x="346.5" y="305.1" fill="#fff" stroke="#fff" stroke-width=".3" font-size="3.7" text-anchor="end" font-weight="bold">20</text><rect x="332.9" y="338.9" width="6.6" height="5.4" fill="#000" stroke="#00ffff" stroke-width="1.15"/><rect x="355.4" y="338.9" width="6.6" height="5.4" fill="#000" stroke="#00ffff" stroke-width="1.15"/><rect x="339.5" y="340" width="15.6" height="3.2" fill="#000" stroke="#00ffff" stroke-width="1.1"/><rect x="340.3" y="340.7" width="2.2" height="1.8" fill="#fff"/><rect x="352.1" y="340.7" width="2.2" height="1.8" fill="#fff"/><text x="346.5" y="329.9" fill="#fff" stroke="#fff" stroke-width=".3" font-size="3.7" text-anchor="end" font-weight="bold">20</text><text x="347.3" y="357.3" fill="#fff" stroke="#fff" stroke-width=".3" font-size="4.8" text-anchor="middle" font-weight="bold">L2</text><text x="348.5" y="346.9" fill="#fff" stroke="#fff" stroke-width=".3" font-size="3.7" text-anchor="start" font-weight="bold">15</text><rect x="378.7" y="264.9" width="6.6" height="5.4" fill="#000" stroke="#00ffff" stroke-width="1.15"/><rect x="401.2" y="264.9" width="6.6" height="5.4" fill="#000" stroke="#00ffff" stroke-width="1.15"/><rect x="385.3" y="266" width="15.6" height="3.2" fill="#000" stroke="#00ffff" stroke-width="1.1"/><rect x="386.1" y="266.7" width="2.2" height="1.8" fill="#fff"/><rect x="397.9" y="266.7" width="2.2" height="1.8" fill="#fff"/><text x="392.3" y="258.3" fill="#fff" stroke="#fff" stroke-width=".3" font-size="3.7" text-anchor="end" font-weight="bold">20</text><rect x="378.7" y="289.8" width="6.6" height="5.4" fill="#000" stroke="#00ffff" stroke-width="1.15"/><rect x="401.2" y="289.8" width="6.6" height="5.4" fill="#000" stroke="#00ffff" stroke-width="1.15"/><rect x="385.3" y="290.9" width="15.6" height="3.2" fill="#000" stroke="#00ffff" stroke-width="1.1"/><rect x="386.1" y="291.6" width="2.2" height="1.8" fill="#fff"/><rect x="397.9" y="291.6" width="2.2" height="1.8" fill="#fff"/><text x="392.3" y="280.8" fill="#fff" stroke="#fff" stroke-width=".3" font-size="3.7" text-anchor="end" font-weight="bold">20</text><rect x="378.7" y="314.1" width="6.6" height="5.4" fill="#000" stroke="#00ffff" stroke-width="1.15"/><rect x="401.2" y="314.1" width="6.6" height="5.4" fill="#000" stroke="#00ffff" stroke-width="1.15"/><rect x="385.3" y="315.2" width="15.6" height="3.2" fill="#000" stroke="#00ffff" stroke-width="1.1"/><rect x="386.1" y="315.9" width="2.2" height="1.8" fill="#fff"/><rect x="397.9" y="315.9" width="2.2" height="1.8" fill="#fff"/><text x="392.3" y="305.1" fill="#fff" stroke="#fff" stroke-width=".3" font-size="3.7" text-anchor="end" font-weight="bold">20</text><rect x="378.7" y="338.9" width="6.6" height="5.4" fill="#000" stroke="#00ffff" stroke-width="1.15"/><rect x="401.2" y="338.9" width="6.6" height="5.4" fill="#000" stroke="#00ffff" stroke-width="1.15"/><rect x="385.3" y="340" width="15.6" height="3.2" fill="#000" stroke="#00ffff" stroke-width="1.1"/><rect x="386.1" y="340.7" width="2.2" height="1.8" fill="#fff"/><rect x="397.9" y="340.7" width="2.2" height="1.8" fill="#fff"/><text x="392.3" y="329.9" fill="#fff" stroke="#fff" stroke-width=".3" font-size="3.7" text-anchor="end" font-weight="bold">20</text><text x="393.1" y="357.3" fill="#fff" stroke="#fff" stroke-width=".3" font-size="4.8" text-anchor="middle" font-weight="bold">L3</text><text x="394.3" y="346.9" fill="#fff" stroke="#fff" stroke-width=".3" font-size="3.7" text-anchor="start" font-weight="bold">15</text><text x="277.3" y="271.7" fill="#fff" stroke="#fff" stroke-width=".3" font-size="4.6" text-anchor="middle" font-weight="bold">4F</text><path d="M273.1 272.6L281.5 272.6" stroke="#fff" stroke-width="0.9"/><text x="277.3" y="296.6" fill="#fff" stroke="#fff" stroke-width=".3" font-size="4.6" text-anchor="middle" font-weight="bold">3F</text><path d="M273.1 297.5L281.5 297.5" stroke="#fff" stroke-width="0.9"/><text x="277.3" y="320.9" fill="#fff" stroke="#fff" stroke-width=".3" font-size="4.6" text-anchor="middle" font-weight="bold">2F</text><path d="M273.1 321.8L281.5 321.8" stroke="#fff" stroke-width="0.9"/><text x="277.3" y="345.7" fill="#fff" stroke="#fff" stroke-width=".3" font-size="4.6" text-anchor="middle" font-weight="bold">1F</text><path d="M273.1 346.6L281.5 346.6" stroke="#fff" stroke-width="0.9"/><text x="327.8" y="249.3" fill="#fff" stroke="#fff" stroke-width=".3" font-size="3.7" text-anchor="middle" font-weight="bold">25</text><text x="327.8" y="352.5" fill="#fff" stroke="#fff" stroke-width=".3" font-size="3.7" text-anchor="middle" font-weight="bold">25</text><text x="373.7" y="249.3" fill="#fff" stroke="#fff" stroke-width=".3" font-size="3.7" text-anchor="middle" font-weight="bold">25</text><text x="373.7" y="352.5" fill="#fff" stroke="#fff" stroke-width=".3" font-size="3.7" text-anchor="middle" font-weight="bold">25</text><text x="289.2" y="352.5" fill="#fff" stroke="#fff" stroke-width=".3" font-size="3.7" text-anchor="middle" font-weight="bold">32</text><text x="266.2" y="352.7" fill="#fff" stroke="#fff" stroke-width=".3" font-size="3.8" text-anchor="middle" font-weight="bold">40</text><text x="269.2" y="357.1" fill="#fff" stroke="#fff" stroke-width=".3" font-size="3.8" text-anchor="middle" font-weight="bold">40</text><text x="335.2" y="359.7" fill="#ff00ff" stroke="#ff00ff" stroke-width=".3" font-size="6.4" text-anchor="middle" font-weight="bold">H3</text><path d="M475.2 250.5L598.2 250.5" stroke="#00f000" stroke-width="1.3"/><path d="M475.8 250.5L475.8 349.1" stroke="#00c800" stroke-width="1.3"/><path d="M477.3 349.1L598.2 349.1" stroke="#ffff00" stroke-width="1.2"/><path d="M506.7 250.5L506.7 339.6" stroke="#00c800" stroke-width="1.3"/><path d="M506.7 343.6L506.7 349.1" stroke="#c8c000" stroke-width="1.3"/><path d="M552.5 250.5L552.5 339.6" stroke="#00c800" stroke-width="1.3"/><path d="M552.5 343.6L552.5 349.1" stroke="#c8c000" stroke-width="1.3"/><path d="M597.6 250.5L597.6 339.6" stroke="#00c800" stroke-width="1.3"/><path d="M597.6 343.6L597.6 349.1" stroke="#c8c000" stroke-width="1.3"/><path d="M475.8 348.6L464.3 359.6" stroke="#00c800" stroke-width="1.2"/><path d="M477.8 349.1L468.3 358.6" stroke="#ffff00" stroke-width="1.2"/><rect x="492.3" y="264.9" width="6.6" height="5.4" fill="#000" stroke="#00ffff" stroke-width="1.15"/><rect x="514.8" y="264.9" width="6.6" height="5.4" fill="#000" stroke="#00ffff" stroke-width="1.15"/><rect x="498.9" y="266" width="15.6" height="3.2" fill="#000" stroke="#00ffff" stroke-width="1.1"/><rect x="499.7" y="266.7" width="2.2" height="1.8" fill="#fff"/><rect x="511.5" y="266.7" width="2.2" height="1.8" fill="#fff"/><text x="505.9" y="258.3" fill="#fff" stroke="#fff" stroke-width=".3" font-size="3.7" text-anchor="end" font-weight="bold">20</text><rect x="492.3" y="289.8" width="6.6" height="5.4" fill="#000" stroke="#00ffff" stroke-width="1.15"/><rect x="514.8" y="289.8" width="6.6" height="5.4" fill="#000" stroke="#00ffff" stroke-width="1.15"/><rect x="498.9" y="290.9" width="15.6" height="3.2" fill="#000" stroke="#00ffff" stroke-width="1.1"/><rect x="499.7" y="291.6" width="2.2" height="1.8" fill="#fff"/><rect x="511.5" y="291.6" width="2.2" height="1.8" fill="#fff"/><text x="505.9" y="280.8" fill="#fff" stroke="#fff" stroke-width=".3" font-size="3.7" text-anchor="end" font-weight="bold">20</text><rect x="492.3" y="314.1" width="6.6" height="5.4" fill="#000" stroke="#00ffff" stroke-width="1.15"/><rect x="514.8" y="314.1" width="6.6" height="5.4" fill="#000" stroke="#00ffff" stroke-width="1.15"/><rect x="498.9" y="315.2" width="15.6" height="3.2" fill="#000" stroke="#00ffff" stroke-width="1.1"/><rect x="499.7" y="315.9" width="2.2" height="1.8" fill="#fff"/><rect x="511.5" y="315.9" width="2.2" height="1.8" fill="#fff"/><text x="505.9" y="305.1" fill="#fff" stroke="#fff" stroke-width=".3" font-size="3.7" text-anchor="end" font-weight="bold">20</text><rect x="492.3" y="338.9" width="6.6" height="5.4" fill="#000" stroke="#00ffff" stroke-width="1.15"/><rect x="514.8" y="338.9" width="6.6" height="5.4" fill="#000" stroke="#00ffff" stroke-width="1.15"/><rect x="498.9" y="340" width="15.6" height="3.2" fill="#000" stroke="#00ffff" stroke-width="1.1"/><rect x="499.7" y="340.7" width="2.2" height="1.8" fill="#fff"/><rect x="511.5" y="340.7" width="2.2" height="1.8" fill="#fff"/><text x="505.9" y="329.9" fill="#fff" stroke="#fff" stroke-width=".3" font-size="3.7" text-anchor="end" font-weight="bold">20</text><text x="506.7" y="357.3" fill="#fff" stroke="#fff" stroke-width=".3" font-size="4.8" text-anchor="middle" font-weight="bold">L1</text><text x="507.9" y="346.9" fill="#fff" stroke="#fff" stroke-width=".3" font-size="3.7" text-anchor="start" font-weight="bold">15</text><rect x="538.1" y="264.9" width="6.6" height="5.4" fill="#000" stroke="#00ffff" stroke-width="1.15"/><rect x="560.6" y="264.9" width="6.6" height="5.4" fill="#000" stroke="#00ffff" stroke-width="1.15"/><rect x="544.7" y="266" width="15.6" height="3.2" fill="#000" stroke="#00ffff" stroke-width="1.1"/><rect x="545.5" y="266.7" width="2.2" height="1.8" fill="#fff"/><rect x="557.3" y="266.7" width="2.2" height="1.8" fill="#fff"/><text x="551.7" y="258.3" fill="#fff" stroke="#fff" stroke-width=".3" font-size="3.7" text-anchor="end" font-weight="bold">20</text><rect x="538.1" y="289.8" width="6.6" height="5.4" fill="#000" stroke="#00ffff" stroke-width="1.15"/><rect x="560.6" y="289.8" width="6.6" height="5.4" fill="#000" stroke="#00ffff" stroke-width="1.15"/><rect x="544.7" y="290.9" width="15.6" height="3.2" fill="#000" stroke="#00ffff" stroke-width="1.1"/><rect x="545.5" y="291.6" width="2.2" height="1.8" fill="#fff"/><rect x="557.3" y="291.6" width="2.2" height="1.8" fill="#fff"/><text x="551.7" y="280.8" fill="#fff" stroke="#fff" stroke-width=".3" font-size="3.7" text-anchor="end" font-weight="bold">20</text><rect x="538.1" y="314.1" width="6.6" height="5.4" fill="#000" stroke="#00ffff" stroke-width="1.15"/><rect x="560.6" y="314.1" width="6.6" height="5.4" fill="#000" stroke="#00ffff" stroke-width="1.15"/><rect x="544.7" y="315.2" width="15.6" height="3.2" fill="#000" stroke="#00ffff" stroke-width="1.1"/><rect x="545.5" y="315.9" width="2.2" height="1.8" fill="#fff"/><rect x="557.3" y="315.9" width="2.2" height="1.8" fill="#fff"/><text x="551.7" y="305.1" fill="#fff" stroke="#fff" stroke-width=".3" font-size="3.7" text-anchor="end" font-weight="bold">20</text><rect x="538.1" y="338.9" width="6.6" height="5.4" fill="#000" stroke="#00ffff" stroke-width="1.15"/><rect x="560.6" y="338.9" width="6.6" height="5.4" fill="#000" stroke="#00ffff" stroke-width="1.15"/><rect x="544.7" y="340" width="15.6" height="3.2" fill="#000" stroke="#00ffff" stroke-width="1.1"/><rect x="545.5" y="340.7" width="2.2" height="1.8" fill="#fff"/><rect x="557.3" y="340.7" width="2.2" height="1.8" fill="#fff"/><text x="551.7" y="329.9" fill="#fff" stroke="#fff" stroke-width=".3" font-size="3.7" text-anchor="end" font-weight="bold">20</text><text x="552.5" y="357.3" fill="#fff" stroke="#fff" stroke-width=".3" font-size="4.8" text-anchor="middle" font-weight="bold">L2</text><text x="553.7" y="346.9" fill="#fff" stroke="#fff" stroke-width=".3" font-size="3.7" text-anchor="start" font-weight="bold">15</text><rect x="583.2" y="264.9" width="6.6" height="5.4" fill="#000" stroke="#00ffff" stroke-width="1.15"/><rect x="605.7" y="264.9" width="6.6" height="5.4" fill="#000" stroke="#00ffff" stroke-width="1.15"/><rect x="589.8" y="266" width="15.6" height="3.2" fill="#000" stroke="#00ffff" stroke-width="1.1"/><rect x="590.6" y="266.7" width="2.2" height="1.8" fill="#fff"/><rect x="602.4" y="266.7" width="2.2" height="1.8" fill="#fff"/><text x="596.8" y="258.3" fill="#fff" stroke="#fff" stroke-width=".3" font-size="3.7" text-anchor="end" font-weight="bold">20</text><rect x="583.2" y="289.8" width="6.6" height="5.4" fill="#000" stroke="#00ffff" stroke-width="1.15"/><rect x="605.7" y="289.8" width="6.6" height="5.4" fill="#000" stroke="#00ffff" stroke-width="1.15"/><rect x="589.8" y="290.9" width="15.6" height="3.2" fill="#000" stroke="#00ffff" stroke-width="1.1"/><rect x="590.6" y="291.6" width="2.2" height="1.8" fill="#fff"/><rect x="602.4" y="291.6" width="2.2" height="1.8" fill="#fff"/><text x="596.8" y="280.8" fill="#fff" stroke="#fff" stroke-width=".3" font-size="3.7" text-anchor="end" font-weight="bold">20</text><rect x="583.2" y="314.1" width="6.6" height="5.4" fill="#000" stroke="#00ffff" stroke-width="1.15"/><rect x="605.7" y="314.1" width="6.6" height="5.4" fill="#000" stroke="#00ffff" stroke-width="1.15"/><rect x="589.8" y="315.2" width="15.6" height="3.2" fill="#000" stroke="#00ffff" stroke-width="1.1"/><rect x="590.6" y="315.9" width="2.2" height="1.8" fill="#fff"/><rect x="602.4" y="315.9" width="2.2" height="1.8" fill="#fff"/><text x="596.8" y="305.1" fill="#fff" stroke="#fff" stroke-width=".3" font-size="3.7" text-anchor="end" font-weight="bold">20</text><rect x="583.2" y="338.9" width="6.6" height="5.4" fill="#000" stroke="#00ffff" stroke-width="1.15"/><rect x="605.7" y="338.9" width="6.6" height="5.4" fill="#000" stroke="#00ffff" stroke-width="1.15"/><rect x="589.8" y="340" width="15.6" height="3.2" fill="#000" stroke="#00ffff" stroke-width="1.1"/><rect x="590.6" y="340.7" width="2.2" height="1.8" fill="#fff"/><rect x="602.4" y="340.7" width="2.2" height="1.8" fill="#fff"/><text x="596.8" y="329.9" fill="#fff" stroke="#fff" stroke-width=".3" font-size="3.7" text-anchor="end" font-weight="bold">20</text><text x="597.6" y="357.3" fill="#fff" stroke="#fff" stroke-width=".3" font-size="4.8" text-anchor="middle" font-weight="bold">L3</text><text x="598.8" y="346.9" fill="#fff" stroke="#fff" stroke-width=".3" font-size="3.7" text-anchor="start" font-weight="bold">15</text><text x="482.4" y="271.7" fill="#fff" stroke="#fff" stroke-width=".3" font-size="4.6" text-anchor="middle" font-weight="bold">4F</text><path d="M478.2 272.6L486.6 272.6" stroke="#fff" stroke-width="0.9"/><text x="482.4" y="296.6" fill="#fff" stroke="#fff" stroke-width=".3" font-size="4.6" text-anchor="middle" font-weight="bold">3F</text><path d="M478.2 297.5L486.6 297.5" stroke="#fff" stroke-width="0.9"/><text x="482.4" y="320.9" fill="#fff" stroke="#fff" stroke-width=".3" font-size="4.6" text-anchor="middle" font-weight="bold">2F</text><path d="M478.2 321.8L486.6 321.8" stroke="#fff" stroke-width="0.9"/><text x="482.4" y="345.7" fill="#fff" stroke="#fff" stroke-width=".3" font-size="4.6" text-anchor="middle" font-weight="bold">1F</text><path d="M478.2 346.6L486.6 346.6" stroke="#fff" stroke-width="0.9"/><text x="533.1" y="249.3" fill="#fff" stroke="#fff" stroke-width=".3" font-size="3.7" text-anchor="middle" font-weight="bold">25</text><text x="533.1" y="352.5" fill="#fff" stroke="#fff" stroke-width=".3" font-size="3.7" text-anchor="middle" font-weight="bold">25</text><text x="578.5" y="249.3" fill="#fff" stroke="#fff" stroke-width=".3" font-size="3.7" text-anchor="middle" font-weight="bold">25</text><text x="578.5" y="352.5" fill="#fff" stroke="#fff" stroke-width=".3" font-size="3.7" text-anchor="middle" font-weight="bold">25</text><text x="494.3" y="352.5" fill="#fff" stroke="#fff" stroke-width=".3" font-size="3.7" text-anchor="middle" font-weight="bold">32</text><text x="471.3" y="352.7" fill="#fff" stroke="#fff" stroke-width=".3" font-size="3.8" text-anchor="middle" font-weight="bold">40</text><text x="474.3" y="357.1" fill="#fff" stroke="#fff" stroke-width=".3" font-size="3.8" text-anchor="middle" font-weight="bold">40</text><text x="540.3" y="359.7" fill="#ff00ff" stroke="#ff00ff" stroke-width=".3" font-size="6.4" text-anchor="middle" font-weight="bold">H4</text><path d="M259.6 408.6L276.8 391.3H390.2" stroke="#00c800" stroke-width="1.2" fill="none"/><path d="M267.2 408.6L278.7 396.9H393.3" stroke="#f4f400" stroke-width="1.2" fill="none"/><path d="M305.6 383L305.6 391.3" stroke="#ff0000" stroke-width="1.1"/><path d="M307.5 383L307.5 397" stroke="#ff0000" stroke-width="1.1"/><text x="306.9" y="382.6" fill="#ff0000" stroke="#ff0000" stroke-width=".3" font-size="6.6" text-anchor="middle" font-weight="bold">H1</text><path d="M333.4 383L333.4 391.3" stroke="#00c800" stroke-width="1.2"/><path d="M336.2 383L336.2 397" stroke="#f4f400" stroke-width="1.2"/><text x="335.1" y="382.6" fill="#ff00ff" stroke="#ff00ff" stroke-width=".3" font-size="6.6" text-anchor="middle" font-weight="bold">H2</text><path d="M362 383L362 391.3" stroke="#00c800" stroke-width="1.2"/><path d="M364.5 383L364.5 397" stroke="#f4f400" stroke-width="1.2"/><text x="363.6" y="382.6" fill="#ff00ff" stroke="#ff00ff" stroke-width=".3" font-size="6.6" text-anchor="middle" font-weight="bold">H3</text><path d="M390.2 383L390.2 391.3" stroke="#00c800" stroke-width="1.2"/><path d="M393.2 383L393.2 397" stroke="#f4f400" stroke-width="1.2"/><text x="392" y="382.6" fill="#ff00ff" stroke="#ff00ff" stroke-width=".3" font-size="6.6" text-anchor="middle" font-weight="bold">H4</text><text x="293" y="390" fill="#fff" stroke="#fff" stroke-width=".3" font-size="3.7" text-anchor="middle" font-weight="bold">32</text><text x="295" y="401.2" fill="#fff" stroke="#fff" stroke-width=".3" font-size="3.7" text-anchor="middle" font-weight="bold">32</text><text x="321" y="390" fill="#fff" stroke="#fff" stroke-width=".3" font-size="3.7" text-anchor="middle" font-weight="bold">32</text><text x="323" y="401.2" fill="#fff" stroke="#fff" stroke-width=".3" font-size="3.7" text-anchor="middle" font-weight="bold">32</text><text x="350" y="390" fill="#fff" stroke="#fff" stroke-width=".3" font-size="3.7" text-anchor="middle" font-weight="bold">32</text><text x="352" y="401.2" fill="#fff" stroke="#fff" stroke-width=".3" font-size="3.7" text-anchor="middle" font-weight="bold">32</text><text x="378" y="390" fill="#fff" stroke="#fff" stroke-width=".3" font-size="3.7" text-anchor="middle" font-weight="bold">32</text><text x="380" y="401.2" fill="#fff" stroke="#fff" stroke-width=".3" font-size="3.7" text-anchor="middle" font-weight="bold">32</text><text x="301.5" y="387.2" fill="#fff" stroke="#fff" stroke-width=".3" font-size="3.7" text-anchor="middle" font-weight="bold">25</text><text x="329.5" y="387.2" fill="#fff" stroke="#fff" stroke-width=".3" font-size="3.7" text-anchor="middle" font-weight="bold">25</text><text x="358" y="387.2" fill="#fff" stroke="#fff" stroke-width=".3" font-size="3.7" text-anchor="middle" font-weight="bold">25</text><text x="386" y="387.2" fill="#fff" stroke="#fff" stroke-width=".3" font-size="3.7" text-anchor="middle" font-weight="bold">25</text><text x="310.5" y="390.4" fill="#fff" stroke="#fff" stroke-width=".3" font-size="3.7" text-anchor="middle" font-weight="bold">25</text><text x="339.5" y="390.4" fill="#fff" stroke="#fff" stroke-width=".3" font-size="3.7" text-anchor="middle" font-weight="bold">25</text><text x="367.5" y="390.4" fill="#fff" stroke="#fff" stroke-width=".3" font-size="3.7" text-anchor="middle" font-weight="bold">25</text><text x="396.5" y="390.4" fill="#fff" stroke="#fff" stroke-width=".3" font-size="3.7" text-anchor="middle" font-weight="bold">25</text><text x="269.5" y="400.2" fill="#fff" stroke="#fff" stroke-width=".3" font-size="3.8" text-anchor="middle" font-weight="bold">40</text><text x="275" y="405.6" fill="#fff" stroke="#fff" stroke-width=".3" font-size="3.8" text-anchor="middle" font-weight="bold">40</text><text x="259.3" y="416.6" fill="#fff" stroke="#fff" stroke-width=".3" font-size="4.9" text-anchor="start" font-weight="bold">P8--异程采暖系统</text></svg>
<div id="grid" class="a"></div>
<div class="a" style="left:6px;top:443px;width:16px;height:99px;background:#f0f0f0"></div>
<div class="gh t" style="left:6px;top:443px;width:16px;height:17px"></div>
<div class="gh" style="left:6px;top:460px;width:16px;height:16px"></div>
<div class="gh t" style="left:22px;top:443px;width:79px;height:17px"></div>
<div class="gt" style="left:24px;top:446px;height:16px;line-height:16px">立管数</div>
<div class="gc" style="left:22px;top:460px;width:79px;height:16px"></div>
<div class="gt" style="left:24px;top:462px;height:14px;line-height:14px"><span class="num">3</span></div>
<div class="gh t" style="left:101px;top:443px;width:80px;height:17px"></div>
<div class="gt" style="left:103px;top:446px;height:16px;line-height:16px">总负荷<span class="lat">W</span></div>
<div class="gc" style="left:101px;top:460px;width:80px;height:16px"></div>
<div class="gt" style="left:103px;top:462px;height:14px;line-height:14px"><span class="num">28800.00</span></div>
<div class="gh t" style="left:181px;top:443px;width:80px;height:17px"></div>
<div class="gt" style="left:183px;top:446px;height:16px;line-height:16px">总流量<span class="lat">kg/h</span></div>
<div class="gc" style="left:181px;top:460px;width:80px;height:16px"></div>
<div class="gt" style="left:183px;top:462px;height:14px;line-height:14px"><span class="num">990.72</span></div>
<div class="gh t" style="left:261px;top:443px;width:404px;height:17px"></div>
<div class="gt" style="left:263px;top:446px;height:16px;line-height:16px">总阻力<span class="lat">Pa</span></div>
<div class="gc" style="left:261px;top:460px;width:404px;height:16px"></div>
<div class="gt" style="left:263px;top:462px;height:14px;line-height:14px"><span class="num">3494</span></div>
<div class="a" style="left:3px;top:543px;width:663px;height:2px;background:#f6f6f6"></div>
<div class="a" style="left:584px;top:547px;width:1px;height:16px;background:#d7d7d7"></div>
<div class="a" style="left:616px;top:547px;width:1px;height:16px;background:#d7d7d7"></div>
<div class="a" style="left:648px;top:547px;width:1px;height:16px;background:#d7d7d7"></div>
<div class="a" style="left:589px;top:547px;height:19px;line-height:19px;font-size:12px;white-space:nowrap">数字</div>
<svg width="668" height="564" viewBox="0 0 668 564"><rect x="663" y="555" width="2" height="2" fill="#bdbdbd"/><rect x="660" y="558" width="2" height="2" fill="#bdbdbd"/><rect x="663" y="558" width="2" height="2" fill="#bdbdbd"/><rect x="657" y="561" width="2" height="2" fill="#bdbdbd"/><rect x="660" y="561" width="2" height="2" fill="#bdbdbd"/><rect x="663" y="561" width="2" height="2" fill="#bdbdbd"/></svg>
</body>
</html>
